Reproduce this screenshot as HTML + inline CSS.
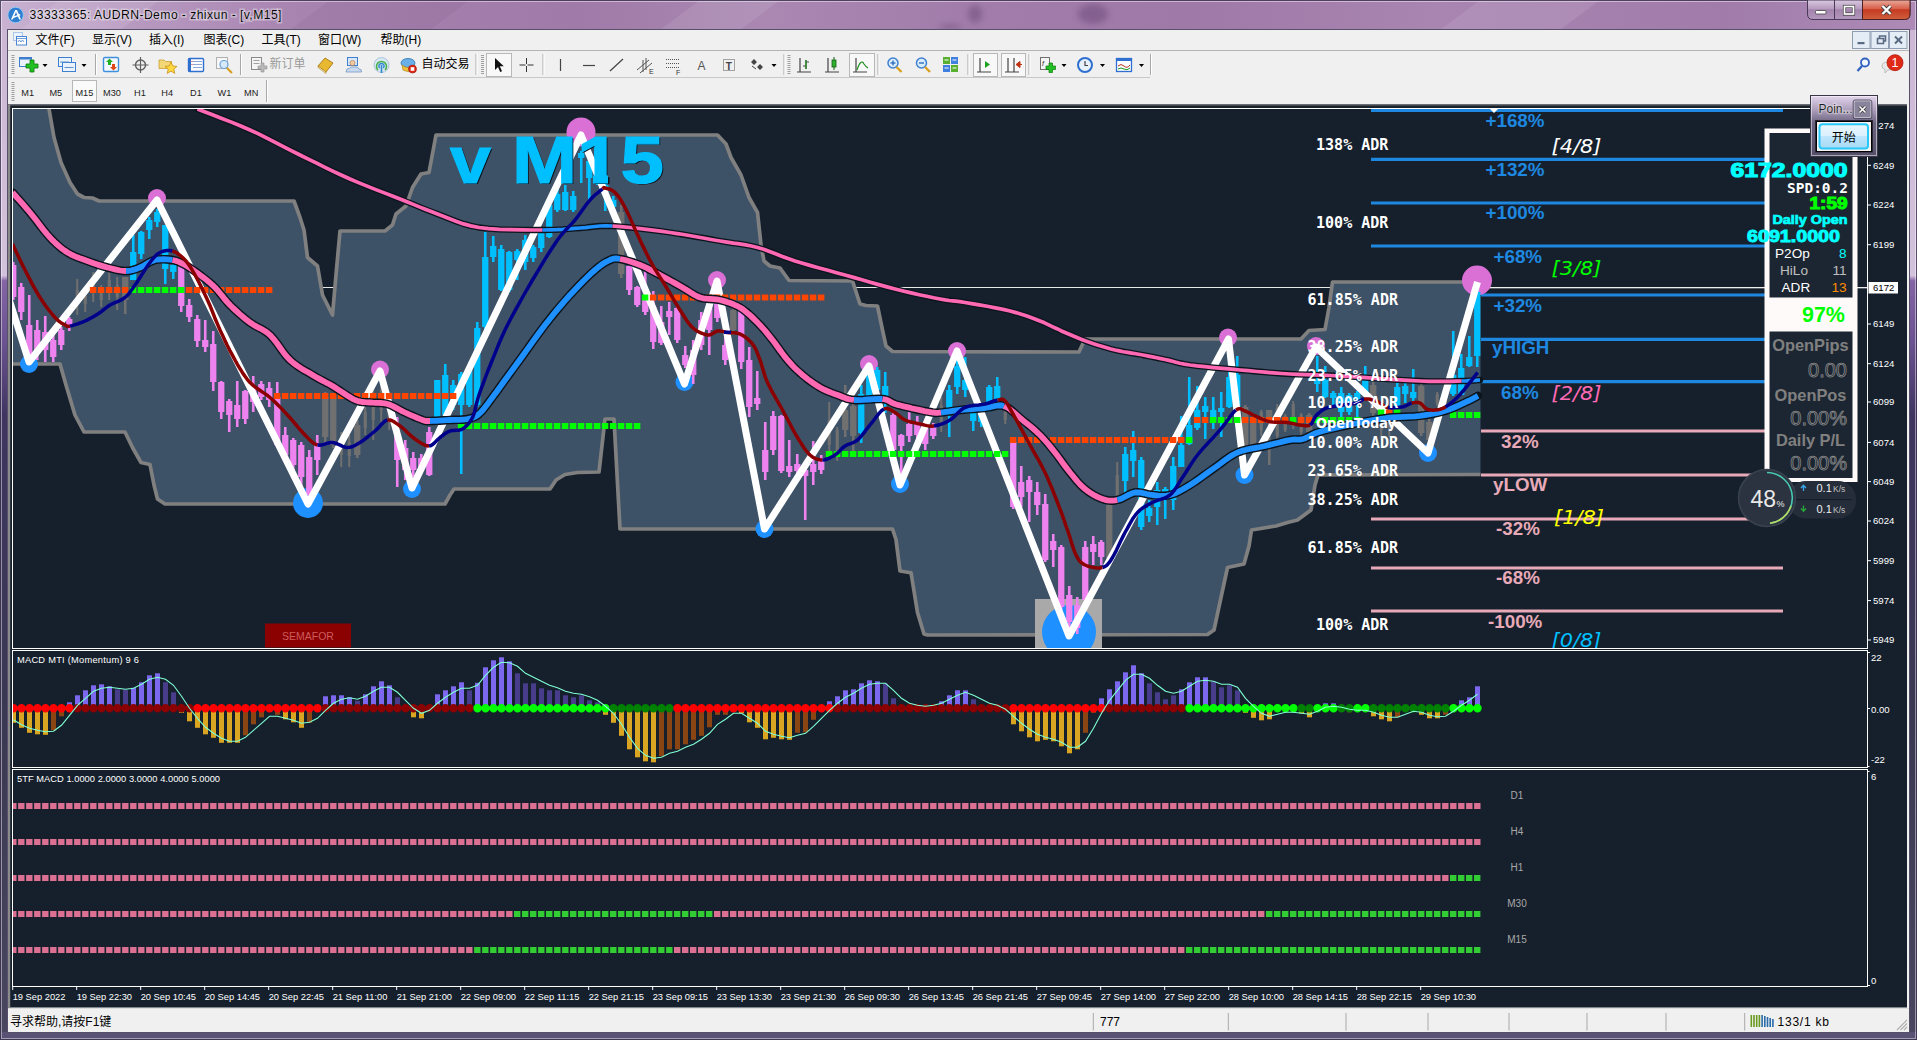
<!DOCTYPE html><html><head><meta charset="utf-8"><title>33333365: AUDRN-Demo - zhixun - [v,M15]</title>
<style>html,body{margin:0;padding:0;background:#8a6a9a;}body{width:1917px;height:1040px;overflow:hidden;position:relative;font-family:"Liberation Sans","Noto Sans CJK SC",sans-serif;}svg{position:absolute;left:0;top:0;display:block}text{white-space:pre}</style></head><body>
<svg width="1917" height="1040" viewBox="0 0 1917 1040">
<defs>
<linearGradient id="gTitle" x1="0" y1="0" x2="1" y2="0">
<stop offset="0" stop-color="#c9b2d2"/><stop offset="0.06" stop-color="#b99cc2"/><stop offset="0.16" stop-color="#a783b0"/><stop offset="0.3" stop-color="#a07aa8"/><stop offset="0.4" stop-color="#aa88b2"/><stop offset="0.5" stop-color="#a27dab"/><stop offset="0.62" stop-color="#9f79a8"/><stop offset="0.75" stop-color="#a985b1"/><stop offset="0.9" stop-color="#a17cab"/><stop offset="1" stop-color="#ad8bb6"/>
</linearGradient>
<linearGradient id="gSide" x1="0" y1="0" x2="0" y2="1">
<stop offset="0" stop-color="#cbb6d4"/><stop offset="0.265" stop-color="#d3c2dc"/><stop offset="0.27" stop-color="#8464a4"/><stop offset="0.33" stop-color="#6a5290"/><stop offset="0.4" stop-color="#3f3560"/><stop offset="0.7" stop-color="#3a3852"/><stop offset="1" stop-color="#4a4660"/>
</linearGradient>
<linearGradient id="gClose" x1="0" y1="0" x2="0" y2="1"><stop offset="0" stop-color="#e9a99a"/><stop offset="0.45" stop-color="#d8604a"/><stop offset="0.5" stop-color="#c53a22"/><stop offset="1" stop-color="#d0603c"/></linearGradient>
<linearGradient id="gBtn" x1="0" y1="0" x2="0" y2="1"><stop offset="0" stop-color="#d9c9e0"/><stop offset="0.45" stop-color="#b79cc0"/><stop offset="0.5" stop-color="#a283ad"/><stop offset="1" stop-color="#b498bd"/></linearGradient>
<linearGradient id="gStart" x1="0" y1="0" x2="0" y2="1"><stop offset="0" stop-color="#eaf6fd"/><stop offset="0.5" stop-color="#d9f0fc"/><stop offset="0.5" stop-color="#bee6fd"/><stop offset="1" stop-color="#a7d9f5"/></linearGradient>
<linearGradient id="gMini" x1="0" y1="0" x2="0" y2="1"><stop offset="0" stop-color="#e4d6ee"/><stop offset="0.25" stop-color="#a99bb8"/><stop offset="0.45" stop-color="#6b6480"/><stop offset="1" stop-color="#55506a"/></linearGradient>
<filter id="fBlur" x="-50%" y="-50%" width="200%" height="200%"><feGaussianBlur stdDeviation="3"/></filter><clipPath id="cMain"><rect x="13" y="109" width="1854" height="539"/></clipPath>
<clipPath id="cOne"><rect x="440" y="100" width="260" height="74.6"/><rect x="440" y="174.5" width="139.5" height="25"/><rect x="593" y="174.5" width="15" height="25"/><rect x="619.5" y="174.5" width="80" height="25"/></clipPath><clipPath id="cTF"><rect x="13" y="770" width="1854" height="216"/></clipPath><clipPath id="cMacd"><rect x="13" y="651" width="1854" height="116"/></clipPath>
</defs>
<rect x="0" y="0" width="1917" height="1040" fill="url(#gSide)"/>
<rect x="0" y="0" width="1917" height="30" fill="url(#gTitle)"/>
<g opacity="0.09" fill="#fff"><polygon points="60,0 160,0 120,30 20,30"/><polygon points="700,0 780,0 740,30 660,30"/><polygon points="1480,0 1600,0 1560,30 1440,30"/></g>
<g opacity="0.06" fill="#402050"><polygon points="330,0 470,0 430,30 290,30"/></g><g fill="#5a3868" opacity="0.4" filter="url(#fBlur)"><ellipse cx="975" cy="14" rx="7" ry="9"/><ellipse cx="1093" cy="14" rx="15" ry="10"/><ellipse cx="950" cy="27" rx="12" ry="2.5"/></g>
<rect x="0" y="1032" width="1917" height="8" fill="#5a5274"/>
<rect x="0.5" y="0.5" width="1916" height="1039" fill="none" stroke="#3c3050" stroke-opacity="0.8"/>
<rect x="1.5" y="1.5" width="1914" height="1037" fill="none" stroke="#fff" stroke-opacity="0.45"/>
<rect x="7" y="29" width="1903" height="1004" fill="#57506a"/>
<rect x="8" y="30" width="1901" height="1002" fill="#F0F0F0"/>
<circle cx="15.6" cy="15" r="7.8" fill="#2f7fd0"/><circle cx="15.6" cy="15" r="7.8" fill="none" stroke="#9cc8f0" stroke-width="1"/>
<path d="M11 19.5 L15.2 10 L17 10 L21 19.5 L19.2 19.5 L16 12 L12.8 19.5 Z M12.5 17 L20 14 L20.5 15.2 L13 18.2Z" fill="#fff"/>
<text x="29.5" y="18.8" font-size="12.2" fill="#fff" stroke="#fff" stroke-width="3" stroke-opacity="0.35" textLength="252" font-family='"Liberation Sans","Noto Sans CJK SC",sans-serif'>33333365: AUDRN-Demo - zhixun - [v,M15]</text>
<text x="29.5" y="18.8" font-size="12.2" fill="#000" textLength="252" font-family='"Liberation Sans","Noto Sans CJK SC",sans-serif'>33333365: AUDRN-Demo - zhixun - [v,M15]</text>
<path d="M1807.5 0 V14 Q1807.5 19.5 1813 19.5 H1904.5 Q1910 19.5 1910 14 V0 Z" fill="url(#gBtn)" stroke="#4a3a58" stroke-width="1"/>
<path d="M1862.5 0 V19.5 H1904.5 Q1910 19.5 1910 14 V0 Z" fill="url(#gClose)" stroke="#4a2020" stroke-width="1"/>
<line x1="1834.5" y1="0" x2="1834.5" y2="19" stroke="#4a3a58"/>
<rect x="1815.5" y="10.5" width="10.5" height="3.5" rx="1" fill="#fff" stroke="#444" stroke-width="0.8"/>
<rect x="1844.5" y="6.5" width="9" height="7.5" fill="none" stroke="#444" stroke-width="3.2"/><rect x="1844.5" y="6.5" width="9" height="7.5" fill="none" stroke="#fff" stroke-width="1.7"/>
<path d="M1882.5 6 L1890.5 14 M1890.5 6 L1882.5 14" stroke="#444" stroke-width="4"/><path d="M1882.5 6 L1890.5 14 M1890.5 6 L1882.5 14" stroke="#fff" stroke-width="2.3"/>
<rect x="8" y="30" width="1901" height="20.5" fill="#F0F0F0"/>
<line x1="8" y1="50.5" x2="1909" y2="50.5" stroke="#b4b4b4"/>
<rect x="13.5" y="32.5" width="9" height="8" fill="#eaf2fb" stroke="#6a9bd8" stroke-dasharray="1 1"/><rect x="16.5" y="36.5" width="10" height="8.5" fill="#fff" stroke="#4a86d0"/><path d="M18 42 l1.5 -2 l1.5 2 l1.5 -2 l1.5 2" stroke="#4a86d0" fill="none" stroke-width="0.8"/><line x1="17" y1="38.5" x2="26" y2="38.5" stroke="#4a86d0" stroke-width="0.8"/>
<text x="35.5" y="44.3" font-size="12" fill="#000" font-family='"Liberation Sans","Noto Sans CJK SC",sans-serif'>文件(F)</text>
<text x="92" y="44.3" font-size="12" fill="#000" font-family='"Liberation Sans","Noto Sans CJK SC",sans-serif'>显示(V)</text>
<text x="149" y="44.3" font-size="12" fill="#000" font-family='"Liberation Sans","Noto Sans CJK SC",sans-serif'>插入(I)</text>
<text x="203.5" y="44.3" font-size="12" fill="#000" font-family='"Liberation Sans","Noto Sans CJK SC",sans-serif'>图表(C)</text>
<text x="261.5" y="44.3" font-size="12" fill="#000" font-family='"Liberation Sans","Noto Sans CJK SC",sans-serif'>工具(T)</text>
<text x="318" y="44.3" font-size="12" fill="#000" font-family='"Liberation Sans","Noto Sans CJK SC",sans-serif'>窗口(W)</text>
<text x="380.5" y="44.3" font-size="12" fill="#000" font-family='"Liberation Sans","Noto Sans CJK SC",sans-serif'>帮助(H)</text>
<rect x="1852.5" y="31.5" width="17.5" height="17" fill="#e4ecf5" stroke="#8e9db3"/>
<rect x="1871" y="31.5" width="17.5" height="17" fill="#e4ecf5" stroke="#8e9db3"/>
<rect x="1889.5" y="31.5" width="17.5" height="17" fill="#e4ecf5" stroke="#8e9db3"/>
<rect x="1857.5" y="42" width="7" height="2.2" fill="#5a6a82"/>
<path d="M1877.5 38.5 h6 v5 h-6 z M1879.5 38.5 v-2.5 h6 v5 h-2" fill="none" stroke="#5a6a82" stroke-width="1.6"/>
<path d="M1895 36.5 l7 7 m0 -7 l-7 7" stroke="#5a6a82" stroke-width="2"/>
<rect x="8" y="51" width="1901" height="27" fill="#F0F0F0"/>
<line x1="8" y1="77.5" x2="1150" y2="77.5" stroke="#c8c8c8"/>
<rect x="11.5" y="55" width="3" height="1" fill="#a0a0a0"/><rect x="11.5" y="57" width="3" height="1" fill="#a0a0a0"/><rect x="11.5" y="59" width="3" height="1" fill="#a0a0a0"/><rect x="11.5" y="61" width="3" height="1" fill="#a0a0a0"/><rect x="11.5" y="63" width="3" height="1" fill="#a0a0a0"/><rect x="11.5" y="65" width="3" height="1" fill="#a0a0a0"/><rect x="11.5" y="67" width="3" height="1" fill="#a0a0a0"/><rect x="11.5" y="69" width="3" height="1" fill="#a0a0a0"/><rect x="11.5" y="71" width="3" height="1" fill="#a0a0a0"/><rect x="11.5" y="73" width="3" height="1" fill="#a0a0a0"/>
<rect x="481" y="55" width="3" height="1" fill="#a0a0a0"/><rect x="481" y="57" width="3" height="1" fill="#a0a0a0"/><rect x="481" y="59" width="3" height="1" fill="#a0a0a0"/><rect x="481" y="61" width="3" height="1" fill="#a0a0a0"/><rect x="481" y="63" width="3" height="1" fill="#a0a0a0"/><rect x="481" y="65" width="3" height="1" fill="#a0a0a0"/><rect x="481" y="67" width="3" height="1" fill="#a0a0a0"/><rect x="481" y="69" width="3" height="1" fill="#a0a0a0"/><rect x="481" y="71" width="3" height="1" fill="#a0a0a0"/><rect x="481" y="73" width="3" height="1" fill="#a0a0a0"/>
<rect x="787.5" y="55" width="3" height="1" fill="#a0a0a0"/><rect x="787.5" y="57" width="3" height="1" fill="#a0a0a0"/><rect x="787.5" y="59" width="3" height="1" fill="#a0a0a0"/><rect x="787.5" y="61" width="3" height="1" fill="#a0a0a0"/><rect x="787.5" y="63" width="3" height="1" fill="#a0a0a0"/><rect x="787.5" y="65" width="3" height="1" fill="#a0a0a0"/><rect x="787.5" y="67" width="3" height="1" fill="#a0a0a0"/><rect x="787.5" y="69" width="3" height="1" fill="#a0a0a0"/><rect x="787.5" y="71" width="3" height="1" fill="#a0a0a0"/><rect x="787.5" y="73" width="3" height="1" fill="#a0a0a0"/>
<line x1="95.5" y1="54" x2="95.5" y2="75" stroke="#a8a8a8"/><line x1="96.5" y1="54" x2="96.5" y2="75" stroke="#fff"/>
<line x1="240.5" y1="54" x2="240.5" y2="75" stroke="#a8a8a8"/><line x1="241.5" y1="54" x2="241.5" y2="75" stroke="#fff"/>
<line x1="476" y1="54" x2="476" y2="75" stroke="#a8a8a8"/><line x1="477" y1="54" x2="477" y2="75" stroke="#fff"/>
<line x1="543" y1="54" x2="543" y2="75" stroke="#a8a8a8"/><line x1="544" y1="54" x2="544" y2="75" stroke="#fff"/>
<line x1="784" y1="54" x2="784" y2="75" stroke="#a8a8a8"/><line x1="785" y1="54" x2="785" y2="75" stroke="#fff"/>
<line x1="878" y1="54" x2="878" y2="75" stroke="#a8a8a8"/><line x1="879" y1="54" x2="879" y2="75" stroke="#fff"/>
<line x1="968" y1="54" x2="968" y2="75" stroke="#a8a8a8"/><line x1="969" y1="54" x2="969" y2="75" stroke="#fff"/>
<line x1="1029" y1="54" x2="1029" y2="75" stroke="#a8a8a8"/><line x1="1030" y1="54" x2="1030" y2="75" stroke="#fff"/>
<line x1="1150.5" y1="54" x2="1150.5" y2="75" stroke="#a8a8a8"/><line x1="1151.5" y1="54" x2="1151.5" y2="75" stroke="#fff"/>
<path d="M42.5 64 h5 l-2.5 3 z" fill="#000"/>
<path d="M81.5 64 h5 l-2.5 3 z" fill="#000"/>
<path d="M771.5 64 h5 l-2.5 3 z" fill="#000"/>
<path d="M1061.5 64 h5 l-2.5 3 z" fill="#000"/>
<path d="M1100.0 64 h5 l-2.5 3 z" fill="#000"/>
<path d="M1139.0 64 h5 l-2.5 3 z" fill="#000"/>
<rect x="19.5" y="57.5" width="12" height="9" fill="#eaf3fc" stroke="#3f7fcf"/><rect x="19.5" y="57.5" width="12" height="2" fill="#3f7fcf"/><path d="M26 64 h4 v-4 h4 v4 h4 v4 h-4 v4 h-4 v-4 h-4 z" fill="#22c022" stroke="#0a7a0a" stroke-width="0.8"/>
<rect x="58.5" y="57.5" width="13" height="9" fill="#eaf3fc" stroke="#3f7fcf"/><rect x="62.5" y="62.5" width="13" height="9" fill="#eaf3fc" stroke="#3f7fcf"/><path d="M60 62 h9 M64.5 67.5 h9" stroke="#5f8fcf" stroke-width="1"/>
<rect x="103.5" y="57.5" width="15" height="14" rx="1.5" fill="#f4f9ff" stroke="#3f8fdf" stroke-width="1.4"/><path d="M108 65 v-3 h-2 l3.5 -3.5 l3.5 3.5 h-2 v3z" fill="#22b022"/><path d="M112 64 v3 h-2 l3.5 3.5 l3.5 -3.5 h-2 v-3z" fill="#e04818"/>
<circle cx="140.5" cy="65" r="5" fill="none" stroke="#606060" stroke-width="1.4"/><path d="M140.5 57 v16 M132.5 65 h16" stroke="#606060" stroke-width="1.2"/>
<path d="M159 60 h5 l1.5 1.5 h6 v7 h-12.5z" fill="#f4d878" stroke="#c8a030" stroke-width="0.8"/><path d="M171 62 l1.8 4 l4.2 .4 l-3.2 2.8 l1 4.2 l-3.8 -2.3 l-3.8 2.3 l1 -4.2 l-3.2 -2.8 l4.2 -.4z" fill="#ffd840" stroke="#c89018" stroke-width="0.8"/>
<rect x="188.5" y="58.5" width="15" height="13" rx="1" fill="#fdfdff" stroke="#2f6fcf" stroke-width="1.4"/><rect x="188.5" y="58.5" width="2.5" height="13" fill="#2f6fcf"/><path d="M193 61.5 h9 M193 64.5 h9 M193 67.5 h9" stroke="#8aa8d8" stroke-width="1"/><path d="M191.5 61.5 h1 M191.5 64.5 h1" stroke="#e02020" stroke-width="1"/>
<rect x="216.5" y="57.5" width="11" height="11" fill="#f6f6f6" stroke="#b0b0b0"/><circle cx="224" cy="64.5" r="4" fill="#cfe6fa" fill-opacity="0.8" stroke="#6aa0d8" stroke-width="1.2"/><path d="M227 68 l5 5" stroke="#d8a020" stroke-width="2.2"/>
<rect x="251.5" y="57.5" width="10" height="12" fill="#f4f4f4" stroke="#8a8a8a"/><path d="M253.5 60.5 h6 M253.5 63.5 h6" stroke="#a0a0a0"/><path d="M258 66 h3 v-3 h3 v3 h3 v3 h-3 v3 h-3 v-3 h-3z" fill="#b8b8b8" stroke="#909090" stroke-width="0.6"/>
<text x="269.5" y="68" font-size="12" fill="#9a9a9a" font-family='"Liberation Sans","Noto Sans CJK SC",sans-serif'>新订单</text>
<path d="M318 66 l7 -8 l8 5 l-7 9z" fill="#e8b830" stroke="#a87810" stroke-width="0.9"/><path d="M318 66 l8 6 l0 1.5 l-8 -6z" fill="#fff4d0" stroke="#a87810" stroke-width="0.6"/>
<rect x="347.5" y="57.5" width="10" height="8" fill="#d8e8f8" stroke="#3f7fcf"/><circle cx="352.5" cy="63" r="2.6" fill="#f0c8a0" stroke="#a87850" stroke-width="0.6"/><path d="M346 72 q0 -4 4 -4 q1 -2 4 -1 q4 -1 5 2 q3 0 2.5 3z" fill="#c8daf0" stroke="#7898c0" stroke-width="0.8"/>
<circle cx="381.5" cy="65" r="7.5" fill="#d8e8f4" stroke="#a0b8d0" stroke-width="0.8"/><path d="M378 70 a5 5 0 1 1 7 0" fill="none" stroke="#48b048" stroke-width="1.6"/><path d="M379.8 68 a2.6 2.6 0 1 1 3.4 0" fill="none" stroke="#3088d0" stroke-width="1.4"/><rect x="380.7" y="65" width="1.6" height="8" fill="#3088d0"/>
<ellipse cx="408" cy="63" rx="7" ry="4.5" fill="#6ab0e8" stroke="#3070b0" stroke-width="0.8"/><path d="M402 65 q6 5 12 0 l-1 5 q-5 3 -10 0z" fill="#f0c040" stroke="#b08818" stroke-width="0.7"/><circle cx="412.5" cy="69" r="4" fill="#e02818" stroke="#901008" stroke-width="0.6"/><rect x="410.7" y="67.2" width="3.6" height="3.6" fill="#fff"/>
<text x="421.5" y="68" font-size="12" fill="#000" font-family='"Liberation Sans","Noto Sans CJK SC",sans-serif'>自动交易</text>
<rect x="486.5" y="53.5" width="25" height="23" fill="#f8f8f8" stroke="#b8b8b8"/>
<path d="M495 58 v12 l3 -3 l2.2 5 l1.8 -.8 l-2.2 -5 h4z" fill="#111"/>
<path d="M526.5 58 v14 M519.5 65 h14" stroke="#333" stroke-width="1"/><rect x="525.5" y="64" width="2" height="2" fill="#F0F0F0"/>
<path d="M560.5 59 v12" stroke="#444" stroke-width="1.2"/><path d="M583 65.5 h12" stroke="#444" stroke-width="1.2"/><path d="M610 71 l13 -12" stroke="#444" stroke-width="1.2"/>
<path d="M637 70 l12 -10 M640 73 l12 -10 M643 60 v12 M646 58 v12" stroke="#555" stroke-width="1"/><text x="649" y="74" font-size="7" fill="#333" font-family='"Liberation Sans","Noto Sans CJK SC",sans-serif'>E</text>
<path d="M666 59.5 h14 M666 63.5 h14 M666 67.5 h14" stroke="#555" stroke-width="1" stroke-dasharray="1 1"/><text x="676" y="74.5" font-size="7" fill="#333" font-family='"Liberation Sans","Noto Sans CJK SC",sans-serif'>F</text>
<text x="697.5" y="70" font-size="12" fill="#555" font-family='"Liberation Sans","Noto Sans CJK SC",sans-serif'>A</text>
<rect x="723.5" y="59.5" width="11" height="11" fill="none" stroke="#555" stroke-dasharray="1 1"/><text x="725.8" y="69.5" font-size="10" font-weight="bold" fill="#444" font-family='"Liberation Sans","Noto Sans CJK SC",sans-serif'>T</text>
<path d="M751 62 l3 -3 l3 3 l-3 3z M757 67 l3 -3 l3 3 l-3 3z" fill="#444"/><path d="M752 66 l4 3" stroke="#444"/>
<path d="M800 58 v14 M797 72 h14 M806 60 v9 M803 66 h3 M806 62 h3" stroke="#444" stroke-width="1.2" fill="none"/><path d="M806 60 v9" stroke="#209020" stroke-width="1.2"/>
<path d="M828 58 v14 M825 72 h14" stroke="#444" stroke-width="1.2" fill="none"/><rect x="832" y="60" width="4" height="7" fill="#30b030" stroke="#106010" stroke-width="0.8"/><path d="M834 57 v3 M834 67 v3" stroke="#106010"/>
<rect x="849.5" y="53.5" width="25" height="23" fill="#f8f8f8" stroke="#b8b8b8"/>
<path d="M856 58 v14 M853 72 h14" stroke="#444" stroke-width="1.2" fill="none"/><path d="M857 70 q4 -12 7 -6 q2 3 4 4" stroke="#209020" stroke-width="1.2" fill="none"/>
<circle cx="893" cy="63" r="5" fill="#d8ecfb" stroke="#3f7fcf" stroke-width="1.5"/><path d="M896.5 67 l5 5" stroke="#d8a020" stroke-width="2.4"/><path d="M890.5 63 h5" stroke="#2f6fbf" stroke-width="1.4"/>
<path d="M893 60.5 v5" stroke="#2f6fbf" stroke-width="1.4"/>
<circle cx="921.5" cy="63" r="5" fill="#d8ecfb" stroke="#3f7fcf" stroke-width="1.5"/><path d="M925.0 67 l5 5" stroke="#d8a020" stroke-width="2.4"/><path d="M919.0 63 h5" stroke="#2f6fbf" stroke-width="1.4"/>
<rect x="943" y="57" width="7" height="7" fill="#58b030"/><rect x="951" y="57" width="7" height="7" fill="#3f7fdf"/><rect x="943" y="65" width="7" height="7" fill="#3f7fdf"/><rect x="951" y="65" width="7" height="7" fill="#58b030"/><path d="M944.5 60 h4 M952.5 60 h4 M944.5 68 h4 M952.5 68 h4" stroke="#fff" stroke-width="1.2"/>
<rect x="973.5" y="53.5" width="24" height="23" fill="#f8f8f8" stroke="#b8b8b8"/><rect x="1001.5" y="53.5" width="24" height="23" fill="#f8f8f8" stroke="#b8b8b8"/>
<path d="M980 58 v14 M977 72 h14" stroke="#444" stroke-width="1.2" fill="none"/><path d="M985 61 l5 3.5 l-5 3.5z" fill="#20a020"/>
<path d="M1008 58 v14 M1005 72 h14 M1014 58 v14" stroke="#444" stroke-width="1.2" fill="none"/><path d="M1020 61.5 l-4 3 l4 3z M1019 64.5 h3" fill="#c03010" stroke="#c03010"/>
<rect x="1040.5" y="57.5" width="9" height="12" fill="#f4f4f4" stroke="#707070"/><text x="1042" y="66" font-size="7" font-style="italic" fill="#333" font-family='"Liberation Sans","Noto Sans CJK SC",sans-serif'>f</text><path d="M1046 66 h3 v-3 h3.5 v3 h3 v3.5 h-3 v3 h-3.5 v-3 h-3z" fill="#22c022" stroke="#0a7a0a" stroke-width="0.7"/>
<circle cx="1085" cy="65" r="7" fill="#e8f2fc" stroke="#2f6fcf" stroke-width="2"/><path d="M1085 61 v4.5 h3" stroke="#444" stroke-width="1.2" fill="none"/>
<rect x="1116.5" y="58.5" width="15" height="13" fill="#fafcff" stroke="#2f6fcf" stroke-width="1.3"/><rect x="1116.5" y="58.5" width="15" height="2.5" fill="#2f6fcf"/><path d="M1118 66 q3 -3 6 0 t6 -1" stroke="#c03020" fill="none"/><path d="M1118 69 q3 -2 6 0 t6 -1" stroke="#20a020" fill="none"/>
<circle cx="1865" cy="62.5" r="4" fill="#f0f6ff" stroke="#2f5fbf" stroke-width="1.8"/><path d="M1862 66 l-4.5 5" stroke="#2f5fbf" stroke-width="2.2"/>
<path d="M1882 66 q0 -4 6 -4 q6 0 6 4 q0 4 -6 4 l-3 3 l0 -3.5 q-3 -1 -3 -3.5z" fill="#e8e8e8" stroke="#b0b0b0" stroke-width="0.8"/><circle cx="1895" cy="62.7" r="8" fill="#e02a18"/><circle cx="1895" cy="62.7" r="8" fill="none" stroke="#b01808" stroke-width="0.8"/><text x="1891.6" y="67.2" font-size="12.5" fill="#fff" font-family='"Liberation Sans","Noto Sans CJK SC",sans-serif'>1</text>
<rect x="8" y="78" width="1901" height="26.5" fill="#F0F0F0"/>
<rect x="11.5" y="82" width="3" height="1" fill="#a0a0a0"/><rect x="11.5" y="84" width="3" height="1" fill="#a0a0a0"/><rect x="11.5" y="86" width="3" height="1" fill="#a0a0a0"/><rect x="11.5" y="88" width="3" height="1" fill="#a0a0a0"/><rect x="11.5" y="90" width="3" height="1" fill="#a0a0a0"/><rect x="11.5" y="92" width="3" height="1" fill="#a0a0a0"/><rect x="11.5" y="94" width="3" height="1" fill="#a0a0a0"/><rect x="11.5" y="96" width="3" height="1" fill="#a0a0a0"/><rect x="11.5" y="98" width="3" height="1" fill="#a0a0a0"/><rect x="11.5" y="100" width="3" height="1" fill="#a0a0a0"/>
<rect x="72.5" y="80.5" width="24" height="21" fill="#fafafa" stroke="#b8b8b8"/>
<text x="21.3" y="95.5" font-size="9.2" fill="#222" font-family='"Liberation Sans","Noto Sans CJK SC",sans-serif'>M1</text>
<text x="49.4" y="95.5" font-size="9.2" fill="#222" font-family='"Liberation Sans","Noto Sans CJK SC",sans-serif'>M5</text>
<text x="75.4" y="95.5" font-size="9.2" fill="#222" font-family='"Liberation Sans","Noto Sans CJK SC",sans-serif'>M15</text>
<text x="103" y="95.5" font-size="9.2" fill="#222" font-family='"Liberation Sans","Noto Sans CJK SC",sans-serif'>M30</text>
<text x="134" y="95.5" font-size="9.2" fill="#222" font-family='"Liberation Sans","Noto Sans CJK SC",sans-serif'>H1</text>
<text x="161.3" y="95.5" font-size="9.2" fill="#222" font-family='"Liberation Sans","Noto Sans CJK SC",sans-serif'>H4</text>
<text x="190" y="95.5" font-size="9.2" fill="#222" font-family='"Liberation Sans","Noto Sans CJK SC",sans-serif'>D1</text>
<text x="217.5" y="95.5" font-size="9.2" fill="#222" font-family='"Liberation Sans","Noto Sans CJK SC",sans-serif'>W1</text>
<text x="244" y="95.5" font-size="9.2" fill="#222" font-family='"Liberation Sans","Noto Sans CJK SC",sans-serif'>MN</text>
<line x1="266.5" y1="80" x2="266.5" y2="102" stroke="#a8a8a8"/><line x1="267.5" y1="80" x2="267.5" y2="102" stroke="#fff"/>
<rect x="8" y="104.5" width="1899" height="903" fill="#16202C"/>
<rect x="8" y="104" width="1899" height="2" fill="#6a6e74"/><rect x="8" y="105.5" width="1899" height="2.5" fill="#1a222c"/>
<rect x="8" y="104.5" width="2.2" height="903" fill="#8a8a8a"/>
<rect x="1907" y="104.5" width="2" height="903" fill="#F0F0F0"/>
<g clip-path="url(#cMain)">
<line x1="13" y1="287.5" x2="1867" y2="287.5" stroke="#e8e8e8" stroke-width="1"/>
<polygon points="13.0,96.0 47.0,96.0 49.0,109.0 54.0,137.5 61.0,162.5 70.0,182.5 77.5,194.0 84.0,197.5 92.5,198.0 99.0,201.0 294.0,201.0 300.0,217.5 304.0,230.0 307.5,257.5 317.5,266.0 322.5,295.0 332.5,315.0 336.0,275.0 340.0,231.0 385.0,231.0 392.5,225.0 396.0,214.0 406.0,206.0 412.5,187.5 421.0,174.0 429.0,172.5 436.0,135.0 717.5,135.0 726.0,144.0 731.0,157.5 741.0,175.0 749.0,197.5 757.5,212.5 761.0,245.0 764.0,261.0 770.0,266.0 780.0,268.0 789.0,280.5 852.5,281.0 860.0,304.0 866.0,305.5 877.5,306.0 882.5,330.0 886.0,346.0 892.5,351.5 1079.0,352.0 1085.0,339.0 1301.0,339.0 1309.0,330.5 1325.0,329.5 1329.0,307.5 1332.5,282.0 1480.5,282.0 1480.5,474.5 1318.0,475.0 1315.0,485.0 1311.0,510.0 1297.5,520.0 1287.5,522.5 1276.0,526.0 1251.5,530.0 1249.0,546.0 1244.0,564.0 1227.5,567.5 1221.0,597.5 1214.0,630.0 1207.5,634.5 927.5,635.0 924.0,634.0 917.5,612.5 911.0,572.5 909.0,572.5 900.0,571.0 896.0,539.5 892.5,529.0 620.0,529.0 614.0,419.0 605.0,419.0 599.0,472.0 577.5,472.5 565.0,474.5 556.0,480.0 550.0,489.0 454.0,489.0 450.0,495.0 445.0,504.0 165.0,504.0 157.5,499.0 154.0,485.0 150.0,464.5 141.0,462.5 132.5,447.5 125.0,432.0 84.0,432.0 75.0,415.0 66.0,385.0 60.0,364.0 13.0,364.0" fill="#3D5167"/>
<polyline points="13.0,96.0 47.0,96.0 49.0,109.0 54.0,137.5 61.0,162.5 70.0,182.5 77.5,194.0 84.0,197.5 92.5,198.0 99.0,201.0 294.0,201.0 300.0,217.5 304.0,230.0 307.5,257.5 317.5,266.0 322.5,295.0 332.5,315.0 336.0,275.0 340.0,231.0 385.0,231.0 392.5,225.0 396.0,214.0 406.0,206.0 412.5,187.5 421.0,174.0 429.0,172.5 436.0,135.0 717.5,135.0 726.0,144.0 731.0,157.5 741.0,175.0 749.0,197.5 757.5,212.5 761.0,245.0 764.0,261.0 770.0,266.0 780.0,268.0 789.0,280.5 852.5,281.0 860.0,304.0 866.0,305.5 877.5,306.0 882.5,330.0 886.0,346.0 892.5,351.5 1079.0,352.0 1085.0,339.0 1301.0,339.0 1309.0,330.5 1325.0,329.5 1329.0,307.5 1332.5,282.0 1480.5,282.0" fill="none" stroke="#808080" stroke-width="3.7" stroke-linejoin="round"/>
<polyline points="13.0,364.0 60.0,364.0 66.0,385.0 75.0,415.0 84.0,432.0 125.0,432.0 132.5,447.5 141.0,462.5 150.0,464.5 154.0,485.0 157.5,499.0 165.0,504.0 445.0,504.0 450.0,495.0 454.0,489.0 550.0,489.0 556.0,480.0 565.0,474.5 577.5,472.5 599.0,472.0 605.0,419.0 614.0,419.0 620.0,529.0 892.5,529.0 896.0,539.5 900.0,571.0 909.0,572.5 911.0,572.5 917.5,612.5 924.0,634.0 927.5,635.0 1207.5,634.5 1214.0,630.0 1221.0,597.5 1227.5,567.5 1244.0,564.0 1249.0,546.0 1251.5,530.0 1276.0,526.0 1287.5,522.5 1297.5,520.0 1311.0,510.0 1315.0,485.0 1318.0,475.0 1480.5,474.5" fill="none" stroke="#808080" stroke-width="3.7" stroke-linejoin="round"/>
<rect x="1035" y="599" width="67" height="50" fill="#A9A9A9"/>
<line x1="1371" y1="110.5" x2="1783" y2="110.5" stroke="#1E88E0" stroke-width="3.2"/>
<line x1="1371" y1="159.3" x2="1765" y2="159.3" stroke="#1E88E0" stroke-width="3.2"/>
<line x1="1371" y1="203" x2="1765" y2="203" stroke="#1E88E0" stroke-width="3.2"/>
<line x1="1371" y1="246" x2="1765" y2="246" stroke="#1E88E0" stroke-width="3.2"/>
<line x1="1481" y1="295" x2="1765" y2="295" stroke="#1E88E0" stroke-width="3.2"/>
<line x1="1481" y1="339.4" x2="1765" y2="339.4" stroke="#1E88E0" stroke-width="3.2"/>
<line x1="1481" y1="381.6" x2="1765" y2="381.6" stroke="#1E88E0" stroke-width="3.2"/>
<line x1="1481" y1="431" x2="1765" y2="431" stroke="#E8AAB8" stroke-width="3.2"/>
<line x1="1481" y1="475" x2="1765" y2="475" stroke="#E8AAB8" stroke-width="3.2"/>
<line x1="1371" y1="519" x2="1765" y2="519" stroke="#E8AAB8" stroke-width="3.2"/>
<line x1="1371" y1="568" x2="1783" y2="568" stroke="#E8AAB8" stroke-width="3.2"/>
<line x1="1371" y1="611" x2="1783" y2="611" stroke="#E8AAB8" stroke-width="3.2"/>
<line x1="1481" y1="287.8" x2="1867" y2="287.8" stroke="#f0f0f0" stroke-width="1"/>
<circle cx="157" cy="198" r="9" fill="#DA70D6"/>
<circle cx="380" cy="369.5" r="9" fill="#DA70D6"/>
<circle cx="581" cy="132" r="14.5" fill="#DA70D6"/>
<circle cx="717" cy="280" r="9" fill="#DA70D6"/>
<circle cx="869" cy="364" r="9" fill="#DA70D6"/>
<circle cx="957" cy="351" r="9" fill="#DA70D6"/>
<circle cx="1228" cy="337.5" r="9" fill="#DA70D6"/>
<circle cx="1316" cy="346" r="9" fill="#DA70D6"/>
<circle cx="1477" cy="280.5" r="15" fill="#DA70D6"/>
<circle cx="29" cy="364" r="9" fill="#1E90FF"/>
<circle cx="308" cy="503" r="15" fill="#1E90FF"/>
<circle cx="412" cy="489" r="9" fill="#1E90FF"/>
<circle cx="684.5" cy="382" r="9" fill="#1E90FF"/>
<circle cx="764.5" cy="529" r="9" fill="#1E90FF"/>
<circle cx="900" cy="484" r="9" fill="#1E90FF"/>
<circle cx="1069" cy="632" r="27" fill="#1E90FF"/>
<circle cx="1244.5" cy="475" r="9" fill="#1E90FF"/>
<circle cx="1428" cy="453" r="9" fill="#1E90FF"/>
<rect x="11.95" y="262" width="2.6" height="38" fill="#EE82EE"/><rect x="10.10" y="265" width="6.3" height="32" fill="#EE82EE"/><rect x="19.95" y="283" width="2.6" height="37" fill="#EE82EE"/><rect x="18.10" y="287" width="6.3" height="25" fill="#EE82EE"/><rect x="27.95" y="295" width="2.6" height="70" fill="#EE82EE"/><rect x="26.10" y="325" width="6.3" height="30" fill="#EE82EE"/><rect x="35.95" y="320" width="2.6" height="40" fill="#EE82EE"/><rect x="34.10" y="330" width="6.3" height="22" fill="#EE82EE"/><rect x="43.95" y="316" width="2.6" height="46" fill="#EE82EE"/><rect x="42.10" y="332" width="6.3" height="18" fill="#EE82EE"/><rect x="51.95" y="330" width="2.6" height="32" fill="#EE82EE"/><rect x="50.10" y="340" width="6.3" height="17" fill="#EE82EE"/><rect x="59.95" y="327" width="2.6" height="23" fill="#EE82EE"/><rect x="58.10" y="330" width="6.3" height="15" fill="#EE82EE"/><rect x="67.95" y="317" width="2.6" height="14" fill="#EE82EE"/><rect x="66.10" y="319" width="6.3" height="8" fill="#EE82EE"/><rect x="76.25" y="279" width="2.0" height="36" fill="#707070"/><rect x="75.65" y="290" width="3.2" height="10" fill="#707070"/><rect x="84.25" y="290" width="2.0" height="22" fill="#707070"/><rect x="83.65" y="296" width="3.2" height="8" fill="#707070"/><rect x="92.25" y="272" width="2.0" height="30" fill="#707070"/><rect x="91.65" y="280" width="3.2" height="12" fill="#707070"/><rect x="100.25" y="285" width="2.0" height="22" fill="#707070"/><rect x="99.65" y="290" width="3.2" height="10" fill="#707070"/><rect x="108.25" y="272" width="2.0" height="28" fill="#707070"/><rect x="107.65" y="280" width="3.2" height="10" fill="#707070"/><rect x="116.25" y="277" width="2.0" height="33" fill="#707070"/><rect x="115.65" y="285" width="3.2" height="12" fill="#707070"/><rect x="123.95" y="277" width="2.6" height="37" fill="#707070"/><rect x="122.10" y="277" width="6.3" height="23" fill="#707070"/><rect x="131.95" y="235" width="2.6" height="45" fill="#00BFFF"/><rect x="130.10" y="252" width="6.3" height="28" fill="#00BFFF"/><rect x="139.95" y="231" width="2.6" height="28" fill="#00BFFF"/><rect x="138.10" y="232" width="6.3" height="22" fill="#00BFFF"/><rect x="147.95" y="217" width="2.6" height="22" fill="#00BFFF"/><rect x="146.10" y="220" width="6.3" height="10" fill="#00BFFF"/><rect x="155.95" y="209" width="2.6" height="18" fill="#00BFFF"/><rect x="154.10" y="212" width="6.3" height="10" fill="#00BFFF"/><rect x="163.95" y="225" width="2.6" height="59" fill="#00BFFF"/><rect x="162.10" y="225" width="6.3" height="44" fill="#00BFFF"/><rect x="171.95" y="260" width="2.6" height="19" fill="#00BFFF"/><rect x="170.10" y="265" width="6.3" height="7" fill="#00BFFF"/><rect x="179.95" y="264" width="2.6" height="48" fill="#EE82EE"/><rect x="178.10" y="265" width="6.3" height="41" fill="#EE82EE"/><rect x="187.95" y="299" width="2.6" height="23" fill="#EE82EE"/><rect x="186.10" y="305" width="6.3" height="12" fill="#EE82EE"/><rect x="195.95" y="315" width="2.6" height="32" fill="#EE82EE"/><rect x="194.10" y="319" width="6.3" height="22" fill="#EE82EE"/><rect x="203.95" y="320" width="2.6" height="32" fill="#EE82EE"/><rect x="202.10" y="340" width="6.3" height="7" fill="#EE82EE"/><rect x="211.95" y="331" width="2.6" height="60" fill="#EE82EE"/><rect x="210.10" y="344" width="6.3" height="38" fill="#EE82EE"/><rect x="219.95" y="381" width="2.6" height="38" fill="#EE82EE"/><rect x="218.10" y="382" width="6.3" height="30" fill="#EE82EE"/><rect x="227.95" y="399" width="2.6" height="33" fill="#EE82EE"/><rect x="226.10" y="401" width="6.3" height="14" fill="#EE82EE"/><rect x="235.95" y="381" width="2.6" height="46" fill="#EE82EE"/><rect x="234.10" y="405" width="6.3" height="14" fill="#EE82EE"/><rect x="243.95" y="390" width="2.6" height="34" fill="#EE82EE"/><rect x="242.10" y="391" width="6.3" height="28" fill="#EE82EE"/><rect x="251.95" y="376" width="2.6" height="36" fill="#EE82EE"/><rect x="250.10" y="387" width="6.3" height="15" fill="#EE82EE"/><rect x="259.95" y="381" width="2.6" height="19" fill="#EE82EE"/><rect x="258.10" y="384" width="6.3" height="13" fill="#EE82EE"/><rect x="267.95" y="382" width="2.6" height="25" fill="#EE82EE"/><rect x="266.10" y="388" width="6.3" height="12" fill="#EE82EE"/><rect x="275.95" y="382" width="2.6" height="65" fill="#EE82EE"/><rect x="274.10" y="397" width="6.3" height="48" fill="#EE82EE"/><rect x="283.95" y="427" width="2.6" height="33" fill="#EE82EE"/><rect x="282.10" y="435" width="6.3" height="20" fill="#EE82EE"/><rect x="291.95" y="438" width="2.6" height="32" fill="#EE82EE"/><rect x="290.10" y="440" width="6.3" height="25" fill="#EE82EE"/><rect x="299.95" y="442" width="2.6" height="45" fill="#EE82EE"/><rect x="298.10" y="445" width="6.3" height="32" fill="#EE82EE"/><rect x="307.95" y="450" width="2.6" height="53" fill="#EE82EE"/><rect x="306.10" y="457" width="6.3" height="38" fill="#EE82EE"/><rect x="315.95" y="435" width="2.6" height="40" fill="#EE82EE"/><rect x="314.10" y="445" width="6.3" height="15" fill="#EE82EE"/><rect x="323.95" y="392" width="2.6" height="53" fill="#707070"/><rect x="322.10" y="397" width="6.3" height="40" fill="#707070"/><rect x="331.95" y="395" width="2.6" height="53" fill="#707070"/><rect x="330.10" y="397" width="6.3" height="48" fill="#707070"/><rect x="340.25" y="432" width="2.0" height="35" fill="#707070"/><rect x="339.65" y="440" width="3.2" height="15" fill="#707070"/><rect x="348.25" y="435" width="2.0" height="32" fill="#707070"/><rect x="347.65" y="442" width="3.2" height="14" fill="#707070"/><rect x="355.95" y="420" width="2.6" height="38" fill="#707070"/><rect x="354.10" y="425" width="6.3" height="30" fill="#707070"/><rect x="364.25" y="407" width="2.0" height="28" fill="#707070"/><rect x="363.65" y="412" width="3.2" height="16" fill="#707070"/><rect x="372.25" y="385" width="2.0" height="55" fill="#707070"/><rect x="371.65" y="395" width="3.2" height="25" fill="#707070"/><rect x="380.25" y="382" width="2.0" height="40" fill="#707070"/><rect x="379.65" y="390" width="3.2" height="20" fill="#707070"/><rect x="388.25" y="395" width="2.0" height="35" fill="#707070"/><rect x="387.65" y="405" width="3.2" height="17" fill="#707070"/><rect x="395.95" y="417" width="2.6" height="70" fill="#EE82EE"/><rect x="394.10" y="435" width="6.3" height="25" fill="#EE82EE"/><rect x="403.95" y="440" width="2.6" height="40" fill="#EE82EE"/><rect x="402.10" y="448" width="6.3" height="22" fill="#EE82EE"/><rect x="411.95" y="452" width="2.6" height="25" fill="#EE82EE"/><rect x="410.10" y="458" width="6.3" height="12" fill="#EE82EE"/><rect x="419.95" y="454" width="2.6" height="18" fill="#EE82EE"/><rect x="418.10" y="458" width="6.3" height="10" fill="#EE82EE"/><rect x="427.95" y="427" width="2.6" height="49" fill="#EE82EE"/><rect x="426.10" y="432" width="6.3" height="43" fill="#EE82EE"/><rect x="435.95" y="380" width="2.6" height="42" fill="#00BFFF"/><rect x="434.10" y="380" width="6.3" height="37" fill="#00BFFF"/><rect x="443.95" y="364" width="2.6" height="51" fill="#00BFFF"/><rect x="442.10" y="375" width="6.3" height="40" fill="#00BFFF"/><rect x="451.95" y="380" width="2.6" height="30" fill="#00BFFF"/><rect x="450.10" y="385" width="6.3" height="20" fill="#00BFFF"/><rect x="459.95" y="372" width="2.6" height="102" fill="#00BFFF"/><rect x="458.10" y="374" width="6.3" height="31" fill="#00BFFF"/><rect x="467.95" y="362" width="2.6" height="45" fill="#00BFFF"/><rect x="466.10" y="370" width="6.3" height="35" fill="#00BFFF"/><rect x="475.95" y="322" width="2.6" height="85" fill="#00BFFF"/><rect x="474.10" y="328" width="6.3" height="77" fill="#00BFFF"/><rect x="483.95" y="232" width="2.6" height="98" fill="#00BFFF"/><rect x="482.10" y="257" width="6.3" height="70" fill="#00BFFF"/><rect x="491.95" y="236" width="2.6" height="26" fill="#00BFFF"/><rect x="490.10" y="246" width="6.3" height="11" fill="#00BFFF"/><rect x="499.95" y="245" width="2.6" height="46" fill="#00BFFF"/><rect x="498.10" y="249" width="6.3" height="41" fill="#00BFFF"/><rect x="507.95" y="251" width="2.6" height="41" fill="#00BFFF"/><rect x="506.10" y="252" width="6.3" height="38" fill="#00BFFF"/><rect x="515.95" y="249" width="2.6" height="31" fill="#00BFFF"/><rect x="514.10" y="251" width="6.3" height="9" fill="#00BFFF"/><rect x="523.95" y="235" width="2.6" height="35" fill="#00BFFF"/><rect x="522.10" y="240" width="6.3" height="22" fill="#00BFFF"/><rect x="531.95" y="245" width="2.6" height="17" fill="#00BFFF"/><rect x="530.10" y="247" width="6.3" height="11" fill="#00BFFF"/><rect x="539.95" y="230" width="2.6" height="22" fill="#00BFFF"/><rect x="538.10" y="233" width="6.3" height="15" fill="#00BFFF"/><rect x="547.95" y="204" width="2.6" height="34" fill="#00BFFF"/><rect x="546.10" y="205" width="6.3" height="32" fill="#00BFFF"/><rect x="555.95" y="185" width="2.6" height="27" fill="#00BFFF"/><rect x="554.10" y="194" width="6.3" height="16" fill="#00BFFF"/><rect x="563.95" y="185" width="2.6" height="26" fill="#00BFFF"/><rect x="562.10" y="192" width="6.3" height="18" fill="#00BFFF"/><rect x="571.95" y="191" width="2.6" height="21" fill="#00BFFF"/><rect x="570.10" y="196" width="6.3" height="14" fill="#00BFFF"/><rect x="579.95" y="151" width="2.6" height="32" fill="#00BFFF"/><rect x="578.10" y="153" width="6.3" height="5" fill="#00BFFF"/><rect x="587.95" y="150" width="2.6" height="50" fill="#00BFFF"/><rect x="586.10" y="161" width="6.3" height="17" fill="#00BFFF"/><rect x="595.95" y="140" width="2.6" height="45" fill="#00BFFF"/><rect x="594.10" y="145" width="6.3" height="33" fill="#00BFFF"/><rect x="603.95" y="183" width="2.6" height="28" fill="#00BFFF"/><rect x="602.10" y="185" width="6.3" height="7" fill="#00BFFF"/><rect x="611.95" y="196" width="2.6" height="16" fill="#00BFFF"/><rect x="610.10" y="200" width="6.3" height="7" fill="#00BFFF"/><rect x="619.95" y="205" width="2.6" height="73" fill="#707070"/><rect x="618.10" y="212" width="6.3" height="62" fill="#707070"/><rect x="627.95" y="265" width="2.6" height="30" fill="#EE82EE"/><rect x="626.10" y="266" width="6.3" height="24" fill="#EE82EE"/><rect x="635.95" y="286" width="2.6" height="21" fill="#EE82EE"/><rect x="634.10" y="287" width="6.3" height="18" fill="#EE82EE"/><rect x="643.95" y="270" width="2.6" height="45" fill="#EE82EE"/><rect x="642.10" y="295" width="6.3" height="17" fill="#EE82EE"/><rect x="651.95" y="291" width="2.6" height="58" fill="#EE82EE"/><rect x="650.10" y="307" width="6.3" height="35" fill="#EE82EE"/><rect x="659.95" y="306" width="2.6" height="39" fill="#EE82EE"/><rect x="658.10" y="322" width="6.3" height="21" fill="#EE82EE"/><rect x="667.95" y="302" width="2.6" height="33" fill="#EE82EE"/><rect x="666.10" y="311" width="6.3" height="6" fill="#EE82EE"/><rect x="675.95" y="305" width="2.6" height="38" fill="#EE82EE"/><rect x="674.10" y="308" width="6.3" height="32" fill="#EE82EE"/><rect x="683.95" y="346" width="2.6" height="22" fill="#EE82EE"/><rect x="682.10" y="355" width="6.3" height="10" fill="#EE82EE"/><rect x="691.95" y="340" width="2.6" height="44" fill="#EE82EE"/><rect x="690.10" y="350" width="6.3" height="25" fill="#EE82EE"/><rect x="699.95" y="312" width="2.6" height="38" fill="#EE82EE"/><rect x="698.10" y="320" width="6.3" height="25" fill="#EE82EE"/><rect x="707.95" y="300" width="2.6" height="55" fill="#EE82EE"/><rect x="706.10" y="305" width="6.3" height="25" fill="#EE82EE"/><rect x="715.95" y="282" width="2.6" height="40" fill="#EE82EE"/><rect x="714.10" y="288" width="6.3" height="30" fill="#EE82EE"/><rect x="723.95" y="330" width="2.6" height="35" fill="#EE82EE"/><rect x="722.10" y="345" width="6.3" height="15" fill="#EE82EE"/><rect x="731.95" y="305" width="2.6" height="30" fill="#707070"/><rect x="730.10" y="310" width="6.3" height="20" fill="#707070"/><rect x="739.95" y="311" width="2.6" height="58" fill="#EE82EE"/><rect x="738.10" y="311" width="6.3" height="51" fill="#EE82EE"/><rect x="747.95" y="347" width="2.6" height="70" fill="#EE82EE"/><rect x="746.10" y="360" width="6.3" height="47" fill="#EE82EE"/><rect x="755.95" y="371" width="2.6" height="39" fill="#EE82EE"/><rect x="754.10" y="398" width="6.3" height="6" fill="#EE82EE"/><rect x="763.95" y="422" width="2.6" height="58" fill="#EE82EE"/><rect x="762.10" y="450" width="6.3" height="22" fill="#EE82EE"/><rect x="771.95" y="411" width="2.6" height="44" fill="#EE82EE"/><rect x="770.10" y="416" width="6.3" height="34" fill="#EE82EE"/><rect x="779.95" y="415" width="2.6" height="58" fill="#EE82EE"/><rect x="778.10" y="416" width="6.3" height="55" fill="#EE82EE"/><rect x="787.95" y="440" width="2.6" height="37" fill="#EE82EE"/><rect x="786.10" y="466" width="6.3" height="6" fill="#EE82EE"/><rect x="795.95" y="454" width="2.6" height="23" fill="#EE82EE"/><rect x="794.10" y="464" width="6.3" height="7" fill="#EE82EE"/><rect x="803.95" y="468" width="2.6" height="52" fill="#EE82EE"/><rect x="802.10" y="470" width="6.3" height="6" fill="#EE82EE"/><rect x="811.95" y="441" width="2.6" height="44" fill="#EE82EE"/><rect x="810.10" y="464" width="6.3" height="8" fill="#EE82EE"/><rect x="819.95" y="455" width="2.6" height="19" fill="#EE82EE"/><rect x="818.10" y="458" width="6.3" height="12" fill="#EE82EE"/><rect x="828.25" y="402" width="2.0" height="53" fill="#707070"/><rect x="827.65" y="420" width="3.2" height="25" fill="#707070"/><rect x="836.25" y="427" width="2.0" height="34" fill="#707070"/><rect x="835.65" y="430" width="3.2" height="26" fill="#707070"/><rect x="843.95" y="385" width="2.6" height="52" fill="#707070"/><rect x="842.10" y="410" width="6.3" height="20" fill="#707070"/><rect x="851.95" y="403" width="2.6" height="48" fill="#707070"/><rect x="850.10" y="406" width="6.3" height="30" fill="#707070"/><rect x="859.95" y="385" width="2.6" height="58" fill="#00BFFF"/><rect x="858.10" y="394" width="6.3" height="39" fill="#00BFFF"/><rect x="867.95" y="366" width="2.6" height="34" fill="#00BFFF"/><rect x="866.10" y="367" width="6.3" height="30" fill="#00BFFF"/><rect x="875.95" y="367" width="2.6" height="25" fill="#00BFFF"/><rect x="874.10" y="370" width="6.3" height="20" fill="#00BFFF"/><rect x="883.95" y="372" width="2.6" height="41" fill="#00BFFF"/><rect x="882.10" y="386" width="6.3" height="10" fill="#00BFFF"/><rect x="891.95" y="413" width="2.6" height="39" fill="#EE82EE"/><rect x="890.10" y="415" width="6.3" height="35" fill="#EE82EE"/><rect x="899.95" y="434" width="2.6" height="50" fill="#EE82EE"/><rect x="898.10" y="435" width="6.3" height="11" fill="#EE82EE"/><rect x="907.95" y="412" width="2.6" height="30" fill="#EE82EE"/><rect x="906.10" y="424" width="6.3" height="12" fill="#EE82EE"/><rect x="915.95" y="416" width="2.6" height="26" fill="#EE82EE"/><rect x="914.10" y="422" width="6.3" height="13" fill="#EE82EE"/><rect x="923.95" y="425" width="2.6" height="25" fill="#EE82EE"/><rect x="922.10" y="428" width="6.3" height="16" fill="#EE82EE"/><rect x="931.95" y="423" width="2.6" height="16" fill="#EE82EE"/><rect x="930.10" y="426" width="6.3" height="10" fill="#EE82EE"/><rect x="940.25" y="397" width="2.0" height="35" fill="#707070"/><rect x="939.65" y="405" width="3.2" height="20" fill="#707070"/><rect x="947.95" y="385" width="2.6" height="52" fill="#00BFFF"/><rect x="946.10" y="390" width="6.3" height="22" fill="#00BFFF"/><rect x="955.95" y="352" width="2.6" height="42" fill="#00BFFF"/><rect x="954.10" y="366" width="6.3" height="21" fill="#00BFFF"/><rect x="963.95" y="357" width="2.6" height="40" fill="#00BFFF"/><rect x="962.10" y="380" width="6.3" height="10" fill="#00BFFF"/><rect x="971.95" y="410" width="2.6" height="21" fill="#00BFFF"/><rect x="970.10" y="411" width="6.3" height="10" fill="#00BFFF"/><rect x="979.95" y="408" width="2.6" height="19" fill="#00BFFF"/><rect x="978.10" y="412" width="6.3" height="10" fill="#00BFFF"/><rect x="987.95" y="385" width="2.6" height="27" fill="#00BFFF"/><rect x="986.10" y="387" width="6.3" height="15" fill="#00BFFF"/><rect x="995.95" y="377" width="2.6" height="25" fill="#00BFFF"/><rect x="994.10" y="386" width="6.3" height="14" fill="#00BFFF"/><rect x="1004.25" y="410" width="2.0" height="14" fill="#707070"/><rect x="1003.65" y="412" width="3.2" height="8" fill="#707070"/><rect x="1011.95" y="440" width="2.6" height="69" fill="#EE82EE"/><rect x="1010.10" y="442" width="6.3" height="65" fill="#EE82EE"/><rect x="1019.95" y="466" width="2.6" height="41" fill="#EE82EE"/><rect x="1018.10" y="482" width="6.3" height="15" fill="#EE82EE"/><rect x="1027.95" y="476" width="2.6" height="46" fill="#EE82EE"/><rect x="1026.10" y="480" width="6.3" height="12" fill="#EE82EE"/><rect x="1035.95" y="482" width="2.6" height="33" fill="#EE82EE"/><rect x="1034.10" y="492" width="6.3" height="13" fill="#EE82EE"/><rect x="1043.95" y="494" width="2.6" height="68" fill="#EE82EE"/><rect x="1042.10" y="504" width="6.3" height="56" fill="#EE82EE"/><rect x="1051.95" y="534" width="2.6" height="33" fill="#EE82EE"/><rect x="1050.10" y="541" width="6.3" height="9" fill="#EE82EE"/><rect x="1059.95" y="545" width="2.6" height="64" fill="#EE82EE"/><rect x="1058.10" y="547" width="6.3" height="60" fill="#EE82EE"/><rect x="1067.95" y="586" width="2.6" height="44" fill="#EE82EE"/><rect x="1066.10" y="595" width="6.3" height="27" fill="#EE82EE"/><rect x="1075.95" y="597" width="2.6" height="37" fill="#EE82EE"/><rect x="1074.10" y="605" width="6.3" height="23" fill="#EE82EE"/><rect x="1083.95" y="541" width="2.6" height="61" fill="#EE82EE"/><rect x="1082.10" y="547" width="6.3" height="53" fill="#EE82EE"/><rect x="1091.95" y="536" width="2.6" height="29" fill="#EE82EE"/><rect x="1090.10" y="544" width="6.3" height="8" fill="#EE82EE"/><rect x="1099.95" y="540" width="2.6" height="25" fill="#EE82EE"/><rect x="1098.10" y="542" width="6.3" height="15" fill="#EE82EE"/><rect x="1107.95" y="500" width="2.6" height="62" fill="#707070"/><rect x="1106.10" y="505" width="6.3" height="55" fill="#707070"/><rect x="1116.25" y="462" width="2.0" height="43" fill="#707070"/><rect x="1115.65" y="475" width="3.2" height="25" fill="#707070"/><rect x="1123.95" y="447" width="2.6" height="53" fill="#00BFFF"/><rect x="1122.10" y="454" width="6.3" height="27" fill="#00BFFF"/><rect x="1131.95" y="431" width="2.6" height="46" fill="#00BFFF"/><rect x="1130.10" y="450" width="6.3" height="11" fill="#00BFFF"/><rect x="1139.95" y="457" width="2.6" height="73" fill="#00BFFF"/><rect x="1138.10" y="460" width="6.3" height="67" fill="#00BFFF"/><rect x="1147.95" y="500" width="2.6" height="22" fill="#00BFFF"/><rect x="1146.10" y="508" width="6.3" height="8" fill="#00BFFF"/><rect x="1155.95" y="482" width="2.6" height="43" fill="#00BFFF"/><rect x="1154.10" y="490" width="6.3" height="17" fill="#00BFFF"/><rect x="1163.95" y="487" width="2.6" height="32" fill="#00BFFF"/><rect x="1162.10" y="489" width="6.3" height="11" fill="#00BFFF"/><rect x="1171.95" y="457" width="2.6" height="53" fill="#00BFFF"/><rect x="1170.10" y="466" width="6.3" height="34" fill="#00BFFF"/><rect x="1179.95" y="416" width="2.6" height="51" fill="#00BFFF"/><rect x="1178.10" y="445" width="6.3" height="22" fill="#00BFFF"/><rect x="1187.95" y="377" width="2.6" height="68" fill="#00BFFF"/><rect x="1186.10" y="425" width="6.3" height="19" fill="#00BFFF"/><rect x="1195.95" y="386" width="2.6" height="44" fill="#00BFFF"/><rect x="1194.10" y="410" width="6.3" height="18" fill="#00BFFF"/><rect x="1203.95" y="397" width="2.6" height="42" fill="#00BFFF"/><rect x="1202.10" y="406" width="6.3" height="6" fill="#00BFFF"/><rect x="1211.95" y="397" width="2.6" height="32" fill="#00BFFF"/><rect x="1210.10" y="410" width="6.3" height="10" fill="#00BFFF"/><rect x="1219.95" y="392" width="2.6" height="45" fill="#00BFFF"/><rect x="1218.10" y="408" width="6.3" height="4" fill="#00BFFF"/><rect x="1227.95" y="358" width="2.6" height="50" fill="#00BFFF"/><rect x="1226.10" y="377" width="6.3" height="30" fill="#00BFFF"/><rect x="1235.95" y="356" width="2.6" height="53" fill="#00BFFF"/><rect x="1234.10" y="375" width="6.3" height="32" fill="#00BFFF"/><rect x="1243.95" y="405" width="2.6" height="42" fill="#707070"/><rect x="1242.10" y="407" width="6.3" height="39" fill="#707070"/><rect x="1251.95" y="415" width="2.6" height="35" fill="#707070"/><rect x="1250.10" y="418" width="6.3" height="28" fill="#707070"/><rect x="1260.25" y="410" width="2.0" height="26" fill="#707070"/><rect x="1259.65" y="412" width="3.2" height="18" fill="#707070"/><rect x="1267.95" y="410" width="2.6" height="55" fill="#707070"/><rect x="1266.10" y="410" width="6.3" height="13" fill="#707070"/><rect x="1276.25" y="404" width="2.0" height="37" fill="#707070"/><rect x="1275.65" y="408" width="3.2" height="28" fill="#707070"/><rect x="1284.25" y="414" width="2.0" height="18" fill="#707070"/><rect x="1283.65" y="416" width="3.2" height="14" fill="#707070"/><rect x="1292.25" y="401" width="2.0" height="28" fill="#707070"/><rect x="1291.65" y="404" width="3.2" height="22" fill="#707070"/><rect x="1300.25" y="413" width="2.0" height="22" fill="#707070"/><rect x="1299.65" y="415" width="3.2" height="17" fill="#707070"/><rect x="1307.95" y="413" width="2.6" height="21" fill="#707070"/><rect x="1306.10" y="415" width="6.3" height="17" fill="#707070"/><rect x="1315.95" y="356" width="2.6" height="36" fill="#00BFFF"/><rect x="1314.10" y="380" width="6.3" height="4" fill="#00BFFF"/><rect x="1323.95" y="366" width="2.6" height="32" fill="#00BFFF"/><rect x="1322.10" y="380" width="6.3" height="17" fill="#00BFFF"/><rect x="1331.95" y="391" width="2.6" height="17" fill="#00BFFF"/><rect x="1330.10" y="393" width="6.3" height="5" fill="#00BFFF"/><rect x="1339.95" y="387" width="2.6" height="30" fill="#00BFFF"/><rect x="1338.10" y="393" width="6.3" height="19" fill="#00BFFF"/><rect x="1347.95" y="393" width="2.6" height="22" fill="#00BFFF"/><rect x="1346.10" y="395" width="6.3" height="17" fill="#00BFFF"/><rect x="1355.95" y="391" width="2.6" height="27" fill="#00BFFF"/><rect x="1354.10" y="393" width="6.3" height="6" fill="#00BFFF"/><rect x="1363.95" y="366" width="2.6" height="30" fill="#00BFFF"/><rect x="1362.10" y="380" width="6.3" height="13" fill="#00BFFF"/><rect x="1371.95" y="382" width="2.6" height="36" fill="#707070"/><rect x="1370.10" y="385" width="6.3" height="28" fill="#707070"/><rect x="1380.25" y="405" width="2.0" height="35" fill="#707070"/><rect x="1379.65" y="412" width="3.2" height="18" fill="#707070"/><rect x="1388.25" y="408" width="2.0" height="29" fill="#707070"/><rect x="1387.65" y="413" width="3.2" height="15" fill="#707070"/><rect x="1395.95" y="383" width="2.6" height="25" fill="#00BFFF"/><rect x="1394.10" y="387" width="6.3" height="20" fill="#00BFFF"/><rect x="1403.95" y="383" width="2.6" height="20" fill="#00BFFF"/><rect x="1402.10" y="386" width="6.3" height="8" fill="#00BFFF"/><rect x="1411.95" y="369" width="2.6" height="34" fill="#00BFFF"/><rect x="1410.10" y="392" width="6.3" height="6" fill="#00BFFF"/><rect x="1419.95" y="384" width="2.6" height="52" fill="#707070"/><rect x="1418.10" y="386" width="6.3" height="47" fill="#707070"/><rect x="1427.95" y="415" width="2.6" height="30" fill="#707070"/><rect x="1426.10" y="422" width="6.3" height="18" fill="#707070"/><rect x="1436.25" y="392" width="2.0" height="14" fill="#707070"/><rect x="1435.65" y="394" width="3.2" height="10" fill="#707070"/><rect x="1444.25" y="396" width="2.0" height="16" fill="#707070"/><rect x="1443.65" y="399" width="3.2" height="9" fill="#707070"/><rect x="1451.95" y="331" width="2.6" height="65" fill="#00BFFF"/><rect x="1450.10" y="375" width="6.3" height="19" fill="#00BFFF"/><rect x="1459.95" y="354" width="2.6" height="41" fill="#00BFFF"/><rect x="1458.10" y="368" width="6.3" height="27" fill="#00BFFF"/><rect x="1467.95" y="336" width="2.6" height="31" fill="#00BFFF"/><rect x="1466.10" y="357" width="6.3" height="9" fill="#00BFFF"/><rect x="1475.95" y="287" width="2.6" height="80" fill="#00BFFF"/><rect x="1474.10" y="292" width="6.3" height="64" fill="#00BFFF"/>
<polyline points="8.0,296.0 29.0,362.0 157.0,200.0 308.0,504.0 380.0,371.0 412.0,488.0 581.0,135.0 684.5,384.0 717.0,281.0 764.5,529.0 869.0,366.0 900.0,485.0 957.0,351.0 1069.0,636.0 1228.5,339.0 1244.5,475.0 1316.0,347.0 1428.0,453.0 1477.5,282.0" fill="none" stroke="#fff" stroke-width="7" stroke-linejoin="round"/>
<line x1="89.85" y1="290" x2="128.40" y2="290" stroke="#FF4500" stroke-width="6" stroke-dasharray="6.5 1.5"/>
<line x1="129.85" y1="290" x2="184.40" y2="290" stroke="#00FF00" stroke-width="6" stroke-dasharray="6.5 1.5"/>
<line x1="185.85" y1="290" x2="272.40" y2="290" stroke="#FF4500" stroke-width="6" stroke-dasharray="6.5 1.5"/>
<line x1="273.85" y1="396" x2="456.40" y2="396" stroke="#FF4500" stroke-width="6" stroke-dasharray="6.5 1.5"/>
<line x1="457.85" y1="426" x2="640.40" y2="426" stroke="#00FF00" stroke-width="6" stroke-dasharray="6.5 1.5"/>
<line x1="641.85" y1="297.5" x2="648.40" y2="297.5" stroke="#00FF00" stroke-width="6" stroke-dasharray="6.5 1.5"/>
<line x1="649.85" y1="297.5" x2="824.40" y2="297.5" stroke="#FF4500" stroke-width="6" stroke-dasharray="6.5 1.5"/>
<line x1="825.85" y1="454" x2="1008.40" y2="454" stroke="#00FF00" stroke-width="6" stroke-dasharray="6.5 1.5"/>
<line x1="1009.85" y1="440" x2="1184.40" y2="440" stroke="#FF4500" stroke-width="6" stroke-dasharray="6.5 1.5"/>
<line x1="1185.85" y1="440" x2="1192.40" y2="440" stroke="#00FF00" stroke-width="6" stroke-dasharray="6.5 1.5"/>
<line x1="1193.85" y1="420" x2="1208.40" y2="420" stroke="#FF4500" stroke-width="6" stroke-dasharray="6.5 1.5"/>
<line x1="1209.85" y1="420" x2="1240.40" y2="420" stroke="#00FF00" stroke-width="6" stroke-dasharray="6.5 1.5"/>
<line x1="1241.85" y1="420" x2="1288.40" y2="420" stroke="#FF4500" stroke-width="6" stroke-dasharray="6.5 1.5"/>
<line x1="1289.85" y1="420" x2="1296.40" y2="420" stroke="#00FF00" stroke-width="6" stroke-dasharray="6.5 1.5"/>
<line x1="1297.85" y1="420" x2="1312.40" y2="420" stroke="#FF4500" stroke-width="6" stroke-dasharray="6.5 1.5"/>
<line x1="1313.85" y1="420" x2="1360.40" y2="420" stroke="#00FF00" stroke-width="6" stroke-dasharray="6.5 1.5"/>
<line x1="1377.85" y1="412.5" x2="1384.40" y2="412.5" stroke="#00FF00" stroke-width="6" stroke-dasharray="6.5 1.5"/>
<line x1="1385.85" y1="412.5" x2="1392.40" y2="412.5" stroke="#FF4500" stroke-width="6" stroke-dasharray="6.5 1.5"/>
<line x1="1393.85" y1="412.5" x2="1400.40" y2="412.5" stroke="#00FF00" stroke-width="6" stroke-dasharray="6.5 1.5"/>
<line x1="1449.85" y1="415" x2="1480.40" y2="415" stroke="#00FF00" stroke-width="6" stroke-dasharray="6.5 1.5"/>
<polyline points="197.5,109.0 203.2,111.2 211.2,114.3 220.6,117.9 230.7,121.9 240.8,126.0 250.0,130.0 258.5,133.9 266.9,138.1 275.2,142.3 283.4,146.6 291.7,150.8 300.0,155.0 308.3,159.1 316.7,163.2 325.0,167.3 333.3,171.3 341.7,175.2 350.0,179.0 358.5,182.6 367.1,186.1 375.8,189.6 384.3,192.9 392.4,196.0 400.0,199.0 406.9,201.8 413.3,204.4 419.3,206.9 425.2,209.3 431.2,211.6 437.5,214.0 443.9,216.5 450.2,219.0 456.6,221.5 463.4,223.9 470.8,225.9 479.0,227.5 488.6,228.6 499.5,229.3 511.0,229.7 522.4,229.9 533.2,230.0 542.5,230.0 550.3,229.9 557.1,229.7 563.2,229.3 568.8,228.8 574.3,228.4 580.0,228.0 585.4,227.6 590.3,227.0 595.0,226.5 600.0,226.0 605.7,225.8 612.5,226.0 620.7,226.6 630.1,227.5 640.2,228.6 650.5,229.9 660.6,231.2 670.0,232.5 678.9,233.8 687.7,235.3 696.2,236.8 704.5,238.2 712.5,239.7 720.0,241.0 727.0,242.1 733.4,243.1 739.5,243.9 745.5,244.9 751.4,246.0 757.5,247.5 763.6,249.3 769.5,251.5 775.5,253.8 781.6,256.2 788.0,258.6 795.0,261.0 802.6,263.3 810.7,265.6 819.2,268.0 827.9,270.3 836.5,272.7 845.0,275.0 853.4,277.4 861.9,279.8 870.3,282.2 878.7,284.6 887.0,286.9 895.0,289.0 903.0,291.0 911.1,292.9 919.1,294.7 926.7,296.3 933.7,297.8 940.0,299.0 945.1,299.9 949.1,300.5 952.5,300.8 955.9,301.2 959.9,301.7 965.0,302.5 971.5,303.6 979.1,304.9 987.2,306.3 995.4,307.9 1003.1,309.4 1010.0,311.0 1015.9,312.6 1021.3,314.2 1026.2,315.8 1030.9,317.5 1035.5,319.2 1040.0,321.0 1044.5,322.8 1048.7,324.8 1052.8,326.8 1056.9,328.7 1060.9,330.7 1065.0,332.5 1069.2,334.3 1073.3,336.0 1077.5,337.8 1081.7,339.4 1085.8,341.0 1090.0,342.5 1094.2,343.9 1098.3,345.3 1102.5,346.6 1106.7,347.8 1110.8,349.0 1115.0,350.0 1119.2,350.9 1123.3,351.7 1127.5,352.4 1131.7,353.1 1135.8,353.8 1140.0,354.5 1144.2,355.3 1148.3,356.1 1152.5,356.9 1156.7,357.8 1160.8,358.6 1165.0,359.5 1168.9,360.4 1172.4,361.3 1175.9,362.2 1179.8,363.2 1184.4,364.1 1190.0,365.0 1196.9,365.9 1204.8,366.7 1213.4,367.6 1222.4,368.4 1231.4,369.2 1240.0,370.0 1248.3,370.7 1256.7,371.5 1265.0,372.2 1273.3,372.9 1281.7,373.5 1290.0,374.0 1298.0,374.4 1305.6,374.7 1313.1,374.9 1321.1,375.2 1329.9,375.5 1340.0,376.0 1352.0,376.7 1365.9,377.6 1380.5,378.6 1395.1,379.6 1408.5,380.4 1420.0,381.0 1429.4,381.3 1437.6,381.4 1444.7,381.4 1451.0,381.3 1456.5,381.1 1461.7,381.0 1466.3,380.9 1470.2,380.7 1473.5,380.5 1476.1,380.3 1478.3,380.1 1480.0,380.0" fill="none" stroke="#0c141c" stroke-width="6.3" stroke-linejoin="round" stroke-linecap="round"/>
<polyline points="197.5,109.0 203.2,111.2 211.2,114.3 220.6,117.9 230.7,121.9 240.8,126.0 250.0,130.0 258.5,133.9 266.9,138.1 275.2,142.3 283.4,146.6 291.7,150.8 300.0,155.0 308.3,159.1 316.7,163.2 325.0,167.3 333.3,171.3 341.7,175.2 350.0,179.0 358.5,182.6 367.1,186.1 375.8,189.6 384.3,192.9 392.4,196.0 400.0,199.0 406.9,201.8 413.3,204.4 419.3,206.9 425.2,209.3 431.2,211.6 437.5,214.0 443.9,216.5 450.2,219.0 456.6,221.5 463.4,223.9 470.8,225.9 479.0,227.5 488.6,228.6 499.5,229.3 511.0,229.7 522.4,229.9 533.2,230.0 542.5,230.0" fill="none" stroke="#FF69B4" stroke-width="3.7" stroke-linejoin="round" stroke-linecap="butt"/>
<polyline points="542.5,230.0 550.3,229.9 557.1,229.7 563.2,229.3 568.8,228.8 574.3,228.4 580.0,228.0 585.4,227.6 590.3,227.0 595.0,226.5 600.0,226.0 605.7,225.8 612.5,226.0" fill="none" stroke="#1E90FF" stroke-width="3.7" stroke-linejoin="round" stroke-linecap="butt"/>
<polyline points="612.5,226.0 620.7,226.6 630.1,227.5 640.2,228.6 650.5,229.9 660.6,231.2 670.0,232.5 678.9,233.8 687.7,235.3 696.2,236.8 704.5,238.2 712.5,239.7 720.0,241.0 727.0,242.1 733.4,243.1 739.5,243.9 745.5,244.9 751.4,246.0 757.5,247.5 763.6,249.3 769.5,251.5 775.5,253.8 781.6,256.2 788.0,258.6 795.0,261.0 802.6,263.3 810.7,265.6 819.2,268.0 827.9,270.3 836.5,272.7 845.0,275.0 853.4,277.4 861.9,279.8 870.3,282.2 878.7,284.6 887.0,286.9 895.0,289.0 903.0,291.0 911.1,292.9 919.1,294.7 926.7,296.3 933.7,297.8 940.0,299.0 945.1,299.9 949.1,300.5 952.5,300.8 955.9,301.2 959.9,301.7 965.0,302.5 971.5,303.6 979.1,304.9 987.2,306.3 995.4,307.9 1003.1,309.4 1010.0,311.0 1015.9,312.6 1021.3,314.2 1026.2,315.8 1030.9,317.5 1035.5,319.2 1040.0,321.0 1044.5,322.8 1048.7,324.8 1052.8,326.8 1056.9,328.7 1060.9,330.7 1065.0,332.5 1069.2,334.3 1073.3,336.0 1077.5,337.8 1081.7,339.4 1085.8,341.0 1090.0,342.5 1094.2,343.9 1098.3,345.3 1102.5,346.6 1106.7,347.8 1110.8,349.0 1115.0,350.0 1119.2,350.9 1123.3,351.7 1127.5,352.4 1131.7,353.1 1135.8,353.8 1140.0,354.5 1144.2,355.3 1148.3,356.1 1152.5,356.9 1156.7,357.8 1160.8,358.6 1165.0,359.5 1168.9,360.4 1172.4,361.3 1175.9,362.2 1179.8,363.2 1184.4,364.1 1190.0,365.0 1196.9,365.9 1204.8,366.7 1213.4,367.6 1222.4,368.4 1231.4,369.2 1240.0,370.0 1248.3,370.7 1256.7,371.5 1265.0,372.2 1273.3,372.9 1281.7,373.5 1290.0,374.0 1298.0,374.4 1305.6,374.7 1313.1,374.9 1321.1,375.2 1329.9,375.5 1340.0,376.0 1352.0,376.7 1365.9,377.6 1380.5,378.6 1395.1,379.6 1408.5,380.4 1420.0,381.0 1429.4,381.3 1437.6,381.4 1444.7,381.4 1451.0,381.3 1456.5,381.1 1461.7,381.0" fill="none" stroke="#FF69B4" stroke-width="3.7" stroke-linejoin="round" stroke-linecap="butt"/>
<polyline points="1461.7,381.0 1466.3,380.9 1470.2,380.7 1473.5,380.5 1476.1,380.3 1478.3,380.1 1480.0,380.0" fill="none" stroke="#1E90FF" stroke-width="3.7" stroke-linejoin="round" stroke-linecap="butt"/>
<polyline points="12.5,192.5 14.4,194.6 16.9,197.5 20.0,200.9 23.3,204.7 26.7,208.6 30.0,212.5 33.2,216.5 36.6,220.8 40.0,225.3 43.4,229.7 46.8,233.9 50.0,237.5 53.0,240.7 55.9,243.5 58.8,246.0 61.6,248.4 64.5,250.5 67.5,252.5 70.7,254.3 74.0,255.9 77.3,257.3 80.7,258.6 84.1,259.8 87.5,261.0 90.9,262.2 94.2,263.4 97.6,264.6 100.9,265.6 104.3,266.6 107.5,267.5 110.7,268.3 113.9,269.1 117.1,269.9 120.2,270.5 123.2,270.9 126.0,271.0 128.6,270.9 131.0,270.5 133.2,269.9 135.4,269.2 137.7,268.4 140.0,267.5 142.4,266.4 144.8,265.0 147.3,263.5 149.8,262.1 152.3,260.9 155.0,260.0 157.8,259.5 160.8,259.3 163.9,259.2 166.9,259.4 169.8,259.6 172.5,260.0 174.8,260.5 176.9,261.1 178.9,261.9 180.8,262.8 182.8,263.8 185.0,265.0 187.4,266.3 189.8,267.9 192.3,269.5 194.9,271.3 197.5,273.1 200.0,275.0 202.5,276.9 205.0,278.8 207.5,280.8 210.0,282.9 212.5,285.1 215.0,287.5 217.4,290.1 219.8,293.0 222.2,295.9 224.6,299.0 227.2,302.0 230.0,305.0 233.0,308.0 236.3,311.0 239.7,314.1 243.1,317.0 246.6,319.9 250.0,322.5 253.3,324.7 256.7,326.6 260.0,328.3 263.3,330.1 266.7,332.3 270.0,335.0 273.3,338.6 276.6,342.8 279.8,347.3 283.1,351.9 286.5,356.3 290.0,360.0 293.6,363.1 297.4,365.9 301.2,368.4 305.1,370.7 308.9,372.8 312.5,375.0 315.9,377.0 319.3,378.9 322.5,380.6 325.7,382.3 329.1,384.0 332.5,386.0 336.2,388.3 340.1,390.9 344.1,393.5 348.0,396.1 351.7,398.3 355.0,400.0 357.9,401.1 360.5,401.7 362.8,402.0 365.1,402.2 367.4,402.3 370.0,402.5 372.8,402.7 375.6,402.8 378.6,402.9 381.6,403.0 384.6,403.4 387.5,404.0 390.4,405.0 393.3,406.4 396.2,407.9 399.2,409.5 402.1,411.1 405.0,412.5 408.0,413.9 411.2,415.3 414.4,416.7 417.4,418.0 420.2,419.1 422.5,420.0 424.2,420.6 425.3,420.9 426.1,421.0 426.9,421.1 428.1,421.0 430.0,421.0 432.6,420.9 435.8,420.8 439.4,420.6 443.1,420.4 446.7,420.2 450.0,420.0 453.1,419.9 456.2,419.8 459.3,419.8 462.2,419.6 465.0,419.4 467.5,419.0 469.7,418.5 471.7,418.0 473.5,417.4 475.3,416.6 477.1,415.5 479.0,414.0 481.1,412.0 483.2,409.6 485.4,406.8 487.6,403.9 489.8,400.9 492.0,398.0 494.1,395.1 496.3,392.2 498.4,389.3 500.5,386.3 502.7,383.2 505.0,380.0 507.3,376.9 509.5,373.9 511.8,370.8 514.2,367.5 516.9,363.8 520.0,359.5 523.6,354.5 527.6,348.9 531.9,342.8 536.3,336.7 540.7,330.7 545.0,325.0 549.2,319.7 553.3,314.5 557.5,309.4 561.7,304.5 565.8,299.7 570.0,295.0 574.3,290.4 578.7,285.7 583.1,281.2 587.4,277.0 591.4,273.2 595.0,270.0 598.1,267.4 600.9,265.2 603.4,263.5 605.7,262.1 607.9,261.0 610.0,260.0 611.8,259.2 613.3,258.7 614.7,258.5 616.1,258.5 617.8,258.7 620.0,259.0 622.8,259.5 625.9,260.3 629.4,261.3 633.0,262.4 636.6,263.7 640.0,265.0 643.3,266.4 646.6,267.9 649.8,269.6 653.1,271.3 656.5,273.1 660.0,275.0 663.7,277.0 667.5,279.1 671.4,281.2 675.3,283.4 679.0,285.5 682.5,287.5 685.7,289.4 688.6,291.3 691.4,293.1 694.2,294.8 697.0,296.3 700.0,297.5 703.2,298.3 706.5,298.7 709.8,298.9 713.2,299.1 716.6,299.4 720.0,300.0 723.4,300.9 726.8,301.9 730.2,303.0 733.5,304.3 736.8,305.8 740.0,307.5 743.1,309.5 746.1,311.9 749.1,314.4 751.9,317.0 754.8,319.8 757.5,322.5 760.1,325.2 762.7,328.1 765.2,330.9 767.6,333.9 770.0,336.9 772.5,340.0 775.0,343.2 777.5,346.7 780.0,350.2 782.5,353.6 785.0,356.9 787.5,360.0 790.0,362.8 792.4,365.5 794.8,368.0 797.3,370.4 799.9,372.7 802.5,375.0 805.3,377.3 808.1,379.5 811.1,381.7 814.1,383.8 817.1,385.7 820.0,387.5 822.9,389.1 825.9,390.5 828.8,391.7 831.7,392.9 834.6,394.0 837.5,395.0 840.2,396.0 842.6,397.1 845.1,398.0 847.6,398.9 850.6,399.5 854.0,400.0 858.2,400.1 863.2,399.9 868.5,399.5 873.7,399.1 878.5,398.9 882.5,399.0 885.4,399.5 887.6,400.2 889.3,401.1 890.9,402.1 892.7,403.1 895.0,404.0 897.9,404.9 901.2,405.7 904.7,406.6 908.2,407.4 911.7,408.3 915.0,409.0 918.2,409.7 921.4,410.4 924.5,411.1 927.4,411.6 930.1,412.1 932.5,412.5 934.3,412.7 935.6,412.9 936.7,412.9 937.7,412.8 939.1,412.7 941.0,412.5 943.5,412.2 946.3,411.8 949.5,411.4 952.8,410.9 956.4,410.4 960.0,410.0 963.9,409.6 968.1,409.3 972.5,409.0 976.9,408.6 981.1,408.3 985.0,408.0 988.5,407.5 991.8,406.7 994.9,406.0 997.9,405.5 1000.9,405.4 1004.0,406.0 1007.1,407.4 1010.2,409.4 1013.3,411.9 1016.4,414.7 1019.5,417.4 1022.5,420.0 1025.5,422.4 1028.5,424.8 1031.5,427.3 1034.4,429.8 1037.2,432.3 1040.0,435.0 1042.6,437.7 1045.2,440.6 1047.7,443.4 1050.1,446.4 1052.5,449.4 1055.0,452.5 1057.5,455.7 1060.0,459.1 1062.5,462.6 1065.0,466.0 1067.5,469.3 1070.0,472.5 1072.5,475.5 1074.9,478.5 1077.3,481.4 1079.8,484.1 1082.4,486.7 1085.0,489.0 1087.8,491.1 1090.7,493.1 1093.8,495.0 1096.8,496.6 1099.7,497.9 1102.5,499.0 1105.1,499.8 1107.6,500.3 1110.0,500.6 1112.4,500.6 1114.9,500.4 1117.5,500.0 1120.3,499.1 1123.1,497.8 1126.1,496.2 1129.1,494.6 1132.1,493.3 1135.0,492.5 1137.9,492.4 1140.8,492.7 1143.8,493.3 1146.7,494.0 1149.6,494.6 1152.5,495.0 1155.4,495.3 1158.2,495.6 1161.1,495.8 1164.0,495.8 1166.9,495.6 1170.0,495.0 1173.1,494.0 1176.3,492.7 1179.5,491.1 1182.9,489.3 1186.3,487.2 1190.0,485.0 1193.9,482.5 1198.1,479.6 1202.3,476.6 1206.7,473.4 1210.9,470.4 1215.0,467.5 1218.8,464.8 1222.5,462.0 1226.1,459.3 1229.7,456.8 1233.5,454.5 1237.5,452.5 1241.8,450.9 1246.4,449.7 1251.1,448.7 1255.8,447.8 1260.5,447.0 1265.0,446.0 1269.5,444.9 1274.0,443.8 1278.4,442.7 1282.6,441.6 1286.6,440.7 1290.0,440.0 1292.8,439.6 1295.1,439.5 1297.0,439.6 1298.8,439.6 1300.7,439.5 1303.0,439.0 1305.4,438.2 1307.8,437.0 1310.2,435.8 1313.0,434.4 1316.2,433.0 1320.0,431.7 1324.6,430.4 1329.8,429.1 1335.5,427.8 1341.4,426.5 1347.3,425.2 1353.0,424.0 1358.6,422.9 1364.2,421.7 1369.8,420.7 1375.5,419.7 1381.1,418.8 1386.7,418.0 1392.4,417.4 1398.1,417.1 1403.9,416.8 1409.5,416.6 1414.9,416.3 1420.0,415.8 1424.7,415.2 1429.1,414.5 1433.2,413.7 1437.2,412.9 1441.1,411.9 1445.0,410.8 1448.9,409.5 1452.9,408.0 1456.7,406.3 1460.4,404.6 1463.7,403.1 1466.7,401.7 1469.3,400.5 1471.7,399.3 1473.7,398.2 1475.5,397.2 1476.9,396.4 1478.0,395.8" fill="none" stroke="#0c141c" stroke-width="8.6" stroke-linejoin="round" stroke-linecap="round"/>
<polyline points="12.5,192.5 14.4,194.6 16.9,197.5 20.0,200.9 23.3,204.7 26.7,208.6 30.0,212.5 33.2,216.5 36.6,220.8 40.0,225.3 43.4,229.7 46.8,233.9 50.0,237.5 53.0,240.7 55.9,243.5 58.8,246.0 61.6,248.4 64.5,250.5 67.5,252.5 70.7,254.3 74.0,255.9 77.3,257.3 80.7,258.6 84.1,259.8 87.5,261.0 90.9,262.2 94.2,263.4 97.6,264.6 100.9,265.6 104.3,266.6 107.5,267.5 110.7,268.3 113.9,269.1 117.1,269.9 120.2,270.5 123.2,270.9 126.0,271.0" fill="none" stroke="#FF69B4" stroke-width="5.8" stroke-linejoin="round" stroke-linecap="butt"/>
<polyline points="126.0,271.0 128.6,270.9 131.0,270.5 133.2,269.9 135.4,269.2 137.7,268.4 140.0,267.5 142.4,266.4 144.8,265.0 147.3,263.5 149.8,262.1 152.3,260.9 155.0,260.0 157.8,259.5 160.8,259.3 163.9,259.2 166.9,259.4 169.8,259.6 172.5,260.0" fill="none" stroke="#1E90FF" stroke-width="5.8" stroke-linejoin="round" stroke-linecap="butt"/>
<polyline points="172.5,260.0 174.8,260.5 176.9,261.1 178.9,261.9 180.8,262.8 182.8,263.8 185.0,265.0 187.4,266.3 189.8,267.9 192.3,269.5 194.9,271.3 197.5,273.1 200.0,275.0 202.5,276.9 205.0,278.8 207.5,280.8 210.0,282.9 212.5,285.1 215.0,287.5 217.4,290.1 219.8,293.0 222.2,295.9 224.6,299.0 227.2,302.0 230.0,305.0 233.0,308.0 236.3,311.0 239.7,314.1 243.1,317.0 246.6,319.9 250.0,322.5 253.3,324.7 256.7,326.6 260.0,328.3 263.3,330.1 266.7,332.3 270.0,335.0 273.3,338.6 276.6,342.8 279.8,347.3 283.1,351.9 286.5,356.3 290.0,360.0 293.6,363.1 297.4,365.9 301.2,368.4 305.1,370.7 308.9,372.8 312.5,375.0 315.9,377.0 319.3,378.9 322.5,380.6 325.7,382.3 329.1,384.0 332.5,386.0 336.2,388.3 340.1,390.9 344.1,393.5 348.0,396.1 351.7,398.3 355.0,400.0 357.9,401.1 360.5,401.7 362.8,402.0 365.1,402.2 367.4,402.3 370.0,402.5 372.8,402.7 375.6,402.8 378.6,402.9 381.6,403.0 384.6,403.4 387.5,404.0 390.4,405.0 393.3,406.4 396.2,407.9 399.2,409.5 402.1,411.1 405.0,412.5 408.0,413.9 411.2,415.3 414.4,416.7 417.4,418.0 420.2,419.1 422.5,420.0 424.2,420.6 425.3,420.9 426.1,421.0 426.9,421.1 428.1,421.0 430.0,421.0" fill="none" stroke="#FF69B4" stroke-width="5.8" stroke-linejoin="round" stroke-linecap="butt"/>
<polyline points="430.0,421.0 432.6,420.9 435.8,420.8 439.4,420.6 443.1,420.4 446.7,420.2 450.0,420.0 453.1,419.9 456.2,419.8 459.3,419.8 462.2,419.6 465.0,419.4 467.5,419.0 469.7,418.5 471.7,418.0 473.5,417.4 475.3,416.6 477.1,415.5 479.0,414.0 481.1,412.0 483.2,409.6 485.4,406.8 487.6,403.9 489.8,400.9 492.0,398.0 494.1,395.1 496.3,392.2 498.4,389.3 500.5,386.3 502.7,383.2 505.0,380.0 507.3,376.9 509.5,373.9 511.8,370.8 514.2,367.5 516.9,363.8 520.0,359.5 523.6,354.5 527.6,348.9 531.9,342.8 536.3,336.7 540.7,330.7 545.0,325.0 549.2,319.7 553.3,314.5 557.5,309.4 561.7,304.5 565.8,299.7 570.0,295.0 574.3,290.4 578.7,285.7 583.1,281.2 587.4,277.0 591.4,273.2 595.0,270.0 598.1,267.4 600.9,265.2 603.4,263.5 605.7,262.1 607.9,261.0 610.0,260.0 611.8,259.2 613.3,258.7 614.7,258.5 616.1,258.5 617.8,258.7 620.0,259.0" fill="none" stroke="#1E90FF" stroke-width="5.8" stroke-linejoin="round" stroke-linecap="butt"/>
<polyline points="620.0,259.0 622.8,259.5 625.9,260.3 629.4,261.3 633.0,262.4 636.6,263.7 640.0,265.0 643.3,266.4 646.6,267.9 649.8,269.6 653.1,271.3 656.5,273.1 660.0,275.0 663.7,277.0 667.5,279.1 671.4,281.2 675.3,283.4 679.0,285.5 682.5,287.5 685.7,289.4 688.6,291.3 691.4,293.1 694.2,294.8 697.0,296.3 700.0,297.5 703.2,298.3 706.5,298.7 709.8,298.9 713.2,299.1 716.6,299.4 720.0,300.0 723.4,300.9 726.8,301.9 730.2,303.0 733.5,304.3 736.8,305.8 740.0,307.5 743.1,309.5 746.1,311.9 749.1,314.4 751.9,317.0 754.8,319.8 757.5,322.5 760.1,325.2 762.7,328.1 765.2,330.9 767.6,333.9 770.0,336.9 772.5,340.0 775.0,343.2 777.5,346.7 780.0,350.2 782.5,353.6 785.0,356.9 787.5,360.0 790.0,362.8 792.4,365.5 794.8,368.0 797.3,370.4 799.9,372.7 802.5,375.0 805.3,377.3 808.1,379.5 811.1,381.7 814.1,383.8 817.1,385.7 820.0,387.5 822.9,389.1 825.9,390.5 828.8,391.7 831.7,392.9 834.6,394.0 837.5,395.0 840.2,396.0 842.6,397.1 845.1,398.0 847.6,398.9 850.6,399.5 854.0,400.0" fill="none" stroke="#FF69B4" stroke-width="5.8" stroke-linejoin="round" stroke-linecap="butt"/>
<polyline points="854.0,400.0 858.2,400.1 863.2,399.9 868.5,399.5 873.7,399.1 878.5,398.9 882.5,399.0" fill="none" stroke="#1E90FF" stroke-width="5.8" stroke-linejoin="round" stroke-linecap="butt"/>
<polyline points="882.5,399.0 885.4,399.5 887.6,400.2 889.3,401.1 890.9,402.1 892.7,403.1 895.0,404.0 897.9,404.9 901.2,405.7 904.7,406.6 908.2,407.4 911.7,408.3 915.0,409.0 918.2,409.7 921.4,410.4 924.5,411.1 927.4,411.6 930.1,412.1 932.5,412.5 934.3,412.7 935.6,412.9 936.7,412.9 937.7,412.8 939.1,412.7 941.0,412.5" fill="none" stroke="#FF69B4" stroke-width="5.8" stroke-linejoin="round" stroke-linecap="butt"/>
<polyline points="941.0,412.5 943.5,412.2 946.3,411.8 949.5,411.4 952.8,410.9 956.4,410.4 960.0,410.0 963.9,409.6 968.1,409.3 972.5,409.0 976.9,408.6 981.1,408.3 985.0,408.0 988.5,407.5 991.8,406.7 994.9,406.0 997.9,405.5 1000.9,405.4 1004.0,406.0" fill="none" stroke="#1E90FF" stroke-width="5.8" stroke-linejoin="round" stroke-linecap="butt"/>
<polyline points="1004.0,406.0 1007.1,407.4 1010.2,409.4 1013.3,411.9 1016.4,414.7 1019.5,417.4 1022.5,420.0 1025.5,422.4 1028.5,424.8 1031.5,427.3 1034.4,429.8 1037.2,432.3 1040.0,435.0 1042.6,437.7 1045.2,440.6 1047.7,443.4 1050.1,446.4 1052.5,449.4 1055.0,452.5 1057.5,455.7 1060.0,459.1 1062.5,462.6 1065.0,466.0 1067.5,469.3 1070.0,472.5 1072.5,475.5 1074.9,478.5 1077.3,481.4 1079.8,484.1 1082.4,486.7 1085.0,489.0 1087.8,491.1 1090.7,493.1 1093.8,495.0 1096.8,496.6 1099.7,497.9 1102.5,499.0 1105.1,499.8 1107.6,500.3 1110.0,500.6 1112.4,500.6 1114.9,500.4 1117.5,500.0" fill="none" stroke="#FF69B4" stroke-width="5.8" stroke-linejoin="round" stroke-linecap="butt"/>
<polyline points="1117.5,500.0 1120.3,499.1 1123.1,497.8 1126.1,496.2 1129.1,494.6 1132.1,493.3 1135.0,492.5 1137.9,492.4 1140.8,492.7 1143.8,493.3 1146.7,494.0 1149.6,494.6 1152.5,495.0 1155.4,495.3 1158.2,495.6 1161.1,495.8 1164.0,495.8 1166.9,495.6 1170.0,495.0 1173.1,494.0 1176.3,492.7 1179.5,491.1 1182.9,489.3 1186.3,487.2 1190.0,485.0 1193.9,482.5 1198.1,479.6 1202.3,476.6 1206.7,473.4 1210.9,470.4 1215.0,467.5 1218.8,464.8 1222.5,462.0 1226.1,459.3 1229.7,456.8 1233.5,454.5 1237.5,452.5 1241.8,450.9 1246.4,449.7 1251.1,448.7 1255.8,447.8 1260.5,447.0 1265.0,446.0 1269.5,444.9 1274.0,443.8 1278.4,442.7 1282.6,441.6 1286.6,440.7 1290.0,440.0 1292.8,439.6 1295.1,439.5 1297.0,439.6 1298.8,439.6 1300.7,439.5 1303.0,439.0 1305.4,438.2 1307.8,437.0 1310.2,435.8 1313.0,434.4 1316.2,433.0 1320.0,431.7 1324.6,430.4 1329.8,429.1 1335.5,427.8 1341.4,426.5 1347.3,425.2 1353.0,424.0 1358.6,422.9 1364.2,421.7 1369.8,420.7 1375.5,419.7 1381.1,418.8 1386.7,418.0 1392.4,417.4 1398.1,417.1 1403.9,416.8 1409.5,416.6 1414.9,416.3 1420.0,415.8 1424.7,415.2 1429.1,414.5 1433.2,413.7 1437.2,412.9 1441.1,411.9 1445.0,410.8 1448.9,409.5 1452.9,408.0 1456.7,406.3 1460.4,404.6 1463.7,403.1 1466.7,401.7 1469.3,400.5 1471.7,399.3 1473.7,398.2 1475.5,397.2 1476.9,396.4 1478.0,395.8" fill="none" stroke="#1E90FF" stroke-width="5.8" stroke-linejoin="round" stroke-linecap="butt"/>
<polyline points="12.5,244.0 13.8,246.8 15.6,250.7 17.8,255.3 20.2,260.3 22.6,265.3 25.0,270.0 27.4,274.6 29.8,279.3 32.3,284.1 34.9,288.8 37.5,293.3 40.0,297.5 42.6,301.4 45.2,305.2 47.8,308.8 50.4,312.0 52.8,315.0 55.0,317.5 57.0,319.5 58.9,321.2 60.6,322.4 62.2,323.4 63.7,324.3 65.0,325.0 66.0,325.6 66.7,326.0 67.2,326.3 67.8,326.4 68.6,326.3 70.0,326.0" fill="none" stroke="#8B0000" stroke-width="3.5" stroke-linejoin="round" stroke-linecap="butt"/>
<polyline points="70.0,326.0 71.9,325.6 74.3,324.9 76.9,324.1 79.6,323.1 82.4,322.1 85.0,321.0 87.6,319.8 90.2,318.4 92.8,316.9 95.4,315.4 97.8,313.9 100.0,312.5 101.9,311.2 103.5,309.9 105.0,308.7 106.5,307.5 108.1,306.2 110.0,305.0 112.3,303.8 114.8,302.7 117.5,301.6 120.2,300.4 122.7,299.0 125.0,297.5 126.9,295.8 128.5,294.1 130.0,292.2 131.5,290.1 133.1,287.7 135.0,285.0 137.3,281.7 139.8,277.8 142.5,273.6 145.2,269.4 147.7,265.6 150.0,262.5 151.9,260.0 153.6,257.9 155.2,256.2 156.7,254.7 158.2,253.5 160.0,252.5 161.9,251.6 164.0,251.0 166.1,250.6 168.2,250.4 170.4,250.5 172.5,251.0" fill="none" stroke="#00008B" stroke-width="3.5" stroke-linejoin="round" stroke-linecap="butt"/>
<polyline points="172.5,251.0 174.6,251.8 176.8,253.0 178.9,254.5 181.0,256.2 183.1,258.0 185.0,260.0 186.8,262.0 188.4,264.2 190.0,266.5 191.6,269.0 193.2,271.9 195.0,275.0 196.9,278.5 199.0,282.4 201.1,286.6 203.2,290.9 205.4,295.4 207.5,300.0 209.6,304.7 211.6,309.6 213.6,314.7 215.6,319.8 217.8,324.9 220.0,330.0 222.4,335.1 224.8,340.3 227.3,345.5 229.9,350.6 232.5,355.4 235.0,360.0 237.4,364.3 239.8,368.3 242.2,372.2 244.6,375.8 247.2,379.3 250.0,382.5 253.1,385.4 256.4,388.0 259.8,390.3 263.3,392.6 266.8,394.9 270.0,397.5 273.1,400.2 276.0,403.1 278.9,405.9 281.8,408.9 284.6,411.9 287.5,415.0 290.5,418.3 293.5,421.9 296.6,425.5 299.5,429.0 302.4,432.2 305.0,435.0 307.3,437.4 309.4,439.5 311.4,441.4 313.3,443.0 315.3,444.2 317.5,445.0" fill="none" stroke="#8B0000" stroke-width="3.5" stroke-linejoin="round" stroke-linecap="butt"/>
<polyline points="317.5,445.0 319.9,445.2 322.3,444.8 324.8,444.1 327.4,443.2 330.0,442.6 332.5,442.5 335.0,443.0 337.6,444.0 340.2,445.2 342.7,446.3 345.1,447.2 347.5,447.5 349.7,447.3 351.8,446.8 353.8,446.0 355.7,445.0 357.8,443.8 360.0,442.5 362.4,441.0 364.9,439.1 367.5,437.1 370.1,435.0 372.6,433.0 375.0,431.0 377.2,428.9 379.4,426.7 381.4,424.4 383.4,422.4 385.4,420.8 387.5,420.0" fill="none" stroke="#00008B" stroke-width="3.5" stroke-linejoin="round" stroke-linecap="butt"/>
<polyline points="387.5,420.0 389.6,419.9 391.6,420.5 393.6,421.5 395.6,422.9 397.8,424.4 400.0,426.0 402.4,427.8 404.9,430.0 407.4,432.4 410.0,434.9 412.5,437.1 415.0,439.0 417.4,440.7 419.9,442.4 422.2,443.8 424.6,445.0 426.9,445.8 429.0,446.0" fill="none" stroke="#8B0000" stroke-width="3.5" stroke-linejoin="round" stroke-linecap="butt"/>
<polyline points="429.0,446.0 431.0,445.5 432.9,444.2 434.8,442.6 436.5,440.8 438.3,439.0 440.0,437.5 441.7,436.2 443.3,435.0 444.9,433.8 446.5,432.8 448.2,431.8 450.0,431.0 452.0,430.5 454.1,430.4 456.2,430.3 458.4,430.2 460.5,429.8 462.5,429.0 464.4,427.8 466.1,426.3 467.9,424.5 469.5,422.5 471.1,420.2 472.5,417.5 473.7,414.5 474.7,411.3 475.5,407.8 476.4,403.9 477.6,399.6 479.0,395.0 480.8,389.8 482.9,384.1 485.2,378.0 487.6,371.7 490.1,365.5 492.5,359.5 494.8,353.8 497.0,348.3 499.3,342.8 501.7,337.2 504.4,331.3 507.5,325.0 511.1,318.0 515.1,310.6 519.4,302.8 523.8,295.0 528.2,287.3 532.5,280.0 536.8,272.8 541.1,265.6 545.5,258.4 549.7,251.7 553.8,245.5 557.5,240.0 560.9,235.5 564.0,231.9 566.9,228.8 569.6,225.9 572.3,223.1 575.0,220.0 577.7,216.6 580.3,213.0 582.8,209.4 585.3,206.0 587.7,202.8 590.0,200.0 592.3,197.5 594.7,195.3 597.0,193.3 599.2,191.6 601.0,190.2 602.5,189.0" fill="none" stroke="#00008B" stroke-width="3.5" stroke-linejoin="round" stroke-linecap="butt"/>
<polyline points="602.5,189.0 603.4,188.2 603.8,187.7 603.9,187.5 604.0,187.6 604.3,187.7 605.0,188.0 606.2,188.3 607.8,188.7 609.5,189.2 611.4,190.0 613.2,191.1 615.0,192.5 616.6,194.2 618.1,196.1 619.7,198.2 621.3,200.8 623.0,203.9 625.0,207.5 627.2,212.0 629.7,217.3 632.3,223.1 635.0,229.1 637.6,234.8 640.0,240.0 642.2,244.7 644.4,249.1 646.4,253.3 648.4,257.3 650.4,261.2 652.5,265.0 654.6,268.6 656.6,271.9 658.6,275.0 660.6,278.1 662.8,281.4 665.0,285.0 667.4,289.0 669.9,293.2 672.5,297.7 675.1,302.0 677.6,306.2 680.0,310.0 682.2,313.5 684.3,316.8 686.2,319.8 688.2,322.7 690.3,325.2 692.5,327.5 694.9,329.5 697.5,331.2 700.2,332.6 702.8,333.7 705.3,334.5 707.5,335.0 709.5,334.9 711.2,334.3 712.8,333.4 714.4,332.4 715.9,331.5 717.5,331.0 719.1,330.9 720.7,331.1 722.3,331.4 724.0,331.8 725.7,332.2 727.5,332.5 729.4,332.7 731.5,332.7 733.6,332.7 735.7,332.9 737.9,333.3 740.0,334.0 742.1,335.1 744.4,336.5 746.6,338.1 748.7,339.9 750.7,341.9 752.5,344.0 754.0,346.2 755.4,348.6 756.6,351.2 757.7,354.0 758.8,356.9 760.0,360.0 761.2,363.3 762.2,366.8 763.3,370.5 764.4,374.4 765.8,378.4 767.5,382.5 769.6,386.8 771.9,391.3 774.5,395.9 777.2,400.6 779.9,405.4 782.5,410.0 785.0,414.7 787.6,419.5 790.2,424.4 792.7,429.1 795.1,433.5 797.5,437.5 799.7,441.1 801.9,444.5 803.9,447.7 805.9,450.5 807.9,452.9 810.0,455.0 812.1,456.7 814.2,458.0 816.2,458.9 818.3,459.5 820.4,459.9 822.5,460.0" fill="none" stroke="#8B0000" stroke-width="3.5" stroke-linejoin="round" stroke-linecap="butt"/>
<polyline points="822.5,460.0 824.6,459.8 826.8,459.2 828.9,458.4 831.0,457.3 833.1,456.2 835.0,455.0 836.8,453.7 838.4,452.2 840.0,450.6 841.6,448.9 843.2,447.4 845.0,446.0 846.9,444.9 849.0,444.1 851.1,443.4 853.2,442.6 855.4,441.5 857.5,440.0 859.6,438.0 861.6,435.7 863.7,433.1 865.7,430.4 867.8,427.7 870.0,425.0 872.3,422.2 874.7,419.0 877.1,415.8 879.5,412.9 881.8,410.5 884.0,409.0" fill="none" stroke="#00008B" stroke-width="3.5" stroke-linejoin="round" stroke-linecap="butt"/>
<polyline points="884.0,409.0 886.0,408.4 887.9,408.6 889.8,409.3 891.5,410.3 893.3,411.5 895.0,412.5 896.7,413.6 898.2,414.8 899.8,416.2 901.3,417.6 903.1,418.9 905.0,420.0 907.2,420.9 909.7,421.7 912.2,422.3 914.9,422.9 917.5,423.5 920.0,424.0 922.4,424.5 924.7,425.1 926.9,425.6 929.2,426.0 931.6,426.2 934.0,426.0" fill="none" stroke="#8B0000" stroke-width="3.5" stroke-linejoin="round" stroke-linecap="butt"/>
<polyline points="934.0,426.0 936.6,425.5 939.2,424.8 941.9,423.9 944.7,422.8 947.4,421.5 950.0,420.0 952.5,418.2 954.9,416.0 957.2,413.6 959.7,411.2 962.2,409.1 965.0,407.5 968.1,406.4 971.6,405.7 975.2,405.2 978.7,404.9 982.0,404.5 985.0,404.0 987.6,403.3 989.9,402.5 992.0,401.7 994.0,401.0 995.8,400.4 997.5,400.0" fill="none" stroke="#00008B" stroke-width="3.5" stroke-linejoin="round" stroke-linecap="butt"/>
<polyline points="997.5,400.0 999.0,399.7 1000.3,399.4 1001.4,399.2 1002.5,399.3 1003.7,399.9 1005.0,401.0 1006.5,402.7 1008.0,404.9 1009.5,407.6 1011.2,410.6 1013.0,413.9 1015.0,417.5 1017.2,421.4 1019.6,425.9 1022.2,430.6 1024.8,435.4 1027.4,440.3 1030.0,445.0 1032.5,449.6 1035.1,454.1 1037.7,458.6 1040.2,463.1 1042.6,467.8 1045.0,472.5 1047.3,477.4 1049.4,482.4 1051.6,487.5 1053.6,492.6 1055.6,497.6 1057.5,502.5 1059.3,507.3 1061.1,511.9 1062.8,516.6 1064.4,521.1 1065.9,525.6 1067.5,530.0 1069.0,534.5 1070.4,539.1 1071.8,543.6 1073.2,547.9 1074.6,551.7 1076.0,555.0 1077.4,557.6 1078.6,559.7 1079.9,561.4 1081.4,562.8 1083.0,563.9 1085.0,565.0 1087.5,566.0 1090.5,566.9 1093.7,567.5 1096.9,567.9 1099.9,567.9 1102.5,567.5" fill="none" stroke="#8B0000" stroke-width="3.5" stroke-linejoin="round" stroke-linecap="butt"/>
<polyline points="1102.5,567.5 1104.6,566.7 1106.3,565.6 1107.8,564.2 1109.3,562.4 1110.8,560.2 1112.5,557.5 1114.4,554.1 1116.5,550.1 1118.6,545.6 1120.7,541.0 1122.9,536.6 1125.0,532.5 1127.1,528.8 1129.1,525.1 1131.1,521.6 1133.1,518.2 1135.3,515.2 1137.5,512.5 1139.8,510.2 1142.2,508.3 1144.7,506.7 1147.2,505.3 1149.8,503.9 1152.5,502.5 1155.3,501.2 1158.3,500.2 1161.4,499.2 1164.4,498.1 1167.3,496.8 1170.0,495.0 1172.3,492.7 1174.4,490.1 1176.4,487.2 1178.3,484.1 1180.3,480.8 1182.5,477.5 1184.8,474.1 1187.0,470.5 1189.4,466.7 1191.9,462.9 1194.5,459.0 1197.5,455.0 1200.9,450.9 1204.7,446.7 1208.7,442.3 1212.7,438.1 1216.5,433.9 1220.0,430.0 1223.1,426.1 1226.1,422.2 1228.8,418.4 1231.4,414.9 1233.8,412.1 1236.0,410.0" fill="none" stroke="#00008B" stroke-width="3.5" stroke-linejoin="round" stroke-linecap="butt"/>
<polyline points="1236.0,410.0 1237.9,408.9 1239.4,408.6 1240.8,408.9 1242.1,409.5 1243.4,410.3 1245.0,411.0 1246.8,411.7 1248.6,412.6 1250.6,413.6 1252.6,414.7 1254.6,415.7 1256.7,416.7 1258.8,417.6 1260.9,418.6 1263.0,419.5 1265.3,420.4 1267.6,421.1 1270.0,421.7 1272.6,422.1 1275.4,422.2 1278.4,422.3 1281.3,422.3 1284.1,422.3 1286.7,422.5 1289.2,422.8 1291.5,423.3 1293.8,423.8 1295.9,424.3 1298.0,424.7 1300.0,425.0 1301.9,425.3 1303.7,425.6 1305.4,425.8 1307.0,425.8 1308.6,425.6 1310.0,425.0" fill="none" stroke="#8B0000" stroke-width="3.5" stroke-linejoin="round" stroke-linecap="butt"/>
<polyline points="1310.0,425.0 1311.3,423.9 1312.4,422.3 1313.3,420.4 1314.3,418.5 1315.4,416.6 1316.7,415.0 1318.1,413.6 1319.6,412.3 1321.1,411.1 1322.8,409.9 1324.6,408.9 1326.7,408.0 1329.1,407.3 1331.8,406.7 1334.6,406.2 1337.5,405.8 1340.4,405.4 1343.0,405.0 1345.5,404.6 1348.0,404.3 1350.4,404.1 1352.7,403.8 1354.8,403.4 1356.7,403.0 1358.3,402.4 1359.5,401.6 1360.6,400.8 1361.7,400.0 1362.8,399.4 1364.0,399.0" fill="none" stroke="#00008B" stroke-width="3.5" stroke-linejoin="round" stroke-linecap="butt"/>
<polyline points="1364.0,399.0 1365.4,398.9 1366.9,398.9 1368.5,399.1 1370.1,399.3 1371.6,399.7 1373.0,400.0 1374.3,400.4 1375.4,400.8 1376.6,401.3 1377.7,401.8 1378.8,402.4 1380.0,403.0 1381.2,403.7 1382.3,404.6 1383.5,405.5 1384.8,406.3 1386.2,407.0 1388.0,407.5" fill="none" stroke="#8B0000" stroke-width="3.5" stroke-linejoin="round" stroke-linecap="butt"/>
<polyline points="1388.0,407.5 1390.2,407.7 1392.7,407.7 1395.5,407.6 1398.2,407.4 1400.8,407.1 1403.0,406.7 1404.8,406.2 1406.4,405.5 1407.8,404.8 1409.1,404.1 1410.3,403.4 1411.7,403.0" fill="none" stroke="#00008B" stroke-width="3.5" stroke-linejoin="round" stroke-linecap="butt"/>
<polyline points="1411.7,403.0 1413.1,402.7 1414.6,402.5 1416.0,402.4 1417.4,402.4 1418.7,402.6 1420.0,403.0 1421.2,403.7 1422.2,404.7 1423.2,405.9 1424.3,407.1 1425.4,408.2 1426.7,409.0 1428.2,409.5 1429.8,409.9 1431.5,410.1 1433.3,410.2 1435.0,410.1 1436.7,410.0 1438.2,409.8 1439.7,409.4 1441.2,409.0 1442.7,408.4 1444.2,407.6 1445.8,406.7" fill="none" stroke="#8B0000" stroke-width="3.5" stroke-linejoin="round" stroke-linecap="butt"/>
<polyline points="1445.8,406.7 1447.5,405.6 1449.3,404.4 1451.1,403.0 1453.0,401.4 1454.8,399.8 1456.7,398.0 1458.6,396.1 1460.5,394.0 1462.4,391.7 1464.4,389.5 1466.2,387.2 1468.0,385.0 1469.8,382.7 1471.7,380.3 1473.5,377.9 1475.1,375.7 1476.5,373.9 1477.5,372.5" fill="none" stroke="#00008B" stroke-width="3.5" stroke-linejoin="round" stroke-linecap="butt"/>
<line x1="724" y1="332.3" x2="731" y2="332.3" stroke="#00008B" stroke-width="3.5"/>
<g font-family='"Liberation Sans","Noto Sans CJK SC",sans-serif' font-weight="bold" font-size="66"><g fill="#0a1018" transform="translate(1.5,1.5)" clip-path="url(#cOne)"><text x="450" y="182.5" textLength="41" lengthAdjust="spacingAndGlyphs">v</text><text x="512" y="182.5" textLength="152" lengthAdjust="spacingAndGlyphs">M15</text></g><g fill="#00BFFF" stroke="#00BFFF" stroke-width="1.2" clip-path="url(#cOne)"><text x="450" y="182.5" textLength="41" lengthAdjust="spacingAndGlyphs">v</text><text x="512" y="182.5" textLength="152" lengthAdjust="spacingAndGlyphs">M15</text></g></g>
<text x="1316" y="149.5" font-size="15" font-weight="bold" fill="#fff" font-family='"DejaVu Sans Mono","Liberation Mono",monospace' textLength="72.4" lengthAdjust="spacingAndGlyphs">138% ADR</text>
<text x="1316" y="227.7" font-size="15" font-weight="bold" fill="#fff" font-family='"DejaVu Sans Mono","Liberation Mono",monospace' textLength="72.4" lengthAdjust="spacingAndGlyphs">100% ADR</text>
<text x="1307.5" y="304.5" font-size="15" font-weight="bold" fill="#fff" font-family='"DejaVu Sans Mono","Liberation Mono",monospace' textLength="90.5" lengthAdjust="spacingAndGlyphs">61.85% ADR</text>
<text x="1307.5" y="351.5" font-size="15" font-weight="bold" fill="#fff" font-family='"DejaVu Sans Mono","Liberation Mono",monospace' textLength="90.5" lengthAdjust="spacingAndGlyphs">38.25% ADR</text>
<text x="1307.5" y="380.7" font-size="15" font-weight="bold" fill="#fff" font-family='"DejaVu Sans Mono","Liberation Mono",monospace' textLength="90.5" lengthAdjust="spacingAndGlyphs">23.65% ADR</text>
<text x="1307.5" y="408.2" font-size="15" font-weight="bold" fill="#fff" font-family='"DejaVu Sans Mono","Liberation Mono",monospace' textLength="90.5" lengthAdjust="spacingAndGlyphs">10.00% ADR</text>
<text x="1307.5" y="448.0" font-size="15" font-weight="bold" fill="#fff" font-family='"DejaVu Sans Mono","Liberation Mono",monospace' textLength="90.5" lengthAdjust="spacingAndGlyphs">10.00% ADR</text>
<text x="1307.5" y="476.0" font-size="15" font-weight="bold" fill="#fff" font-family='"DejaVu Sans Mono","Liberation Mono",monospace' textLength="90.5" lengthAdjust="spacingAndGlyphs">23.65% ADR</text>
<text x="1307.5" y="505.2" font-size="15" font-weight="bold" fill="#fff" font-family='"DejaVu Sans Mono","Liberation Mono",monospace' textLength="90.5" lengthAdjust="spacingAndGlyphs">38.25% ADR</text>
<text x="1307.5" y="553.0" font-size="15" font-weight="bold" fill="#fff" font-family='"DejaVu Sans Mono","Liberation Mono",monospace' textLength="90.5" lengthAdjust="spacingAndGlyphs">61.85% ADR</text>
<text x="1316" y="630.2" font-size="15" font-weight="bold" fill="#fff" font-family='"DejaVu Sans Mono","Liberation Mono",monospace' textLength="72.4" lengthAdjust="spacingAndGlyphs">100% ADR</text>
<text x="1316" y="427.8" font-size="13.5" font-weight="bold" fill="#fff" font-family='"DejaVu Sans","Liberation Sans",sans-serif' textLength="80" lengthAdjust="spacingAndGlyphs">OpenToday</text>
<text x="1485.5" y="126.5" font-size="18.8" font-weight="bold" fill="#1E88E0" font-family='"Liberation Sans","Noto Sans CJK SC",sans-serif'>+168%</text>
<text x="1485.5" y="176" font-size="18.8" font-weight="bold" fill="#1E88E0" font-family='"Liberation Sans","Noto Sans CJK SC",sans-serif'>+132%</text>
<text x="1485.5" y="219" font-size="18.8" font-weight="bold" fill="#1E88E0" font-family='"Liberation Sans","Noto Sans CJK SC",sans-serif'>+100%</text>
<text x="1493.5" y="262.6" font-size="18.8" font-weight="bold" fill="#1E88E0" font-family='"Liberation Sans","Noto Sans CJK SC",sans-serif'>+68%</text>
<text x="1493.5" y="311.6" font-size="18.8" font-weight="bold" fill="#1E88E0" font-family='"Liberation Sans","Noto Sans CJK SC",sans-serif'>+32%</text>
<text x="1492" y="354" font-size="18.8" font-weight="bold" fill="#1E88E0" font-family='"Liberation Sans","Noto Sans CJK SC",sans-serif'>yHIGH</text>
<text x="1501" y="399.3" font-size="18.8" font-weight="bold" fill="#1E88E0" font-family='"Liberation Sans","Noto Sans CJK SC",sans-serif'>68%</text>
<text x="1501" y="448.2" font-size="18.8" font-weight="bold" fill="#E8AAB8" font-family='"Liberation Sans","Noto Sans CJK SC",sans-serif'>32%</text>
<text x="1493" y="490.6" font-size="18.8" font-weight="bold" fill="#E8AAB8" font-family='"Liberation Sans","Noto Sans CJK SC",sans-serif'>yLOW</text>
<text x="1496" y="535" font-size="18.8" font-weight="bold" fill="#E8AAB8" font-family='"Liberation Sans","Noto Sans CJK SC",sans-serif'>-32%</text>
<text x="1496" y="583.6" font-size="18.8" font-weight="bold" fill="#E8AAB8" font-family='"Liberation Sans","Noto Sans CJK SC",sans-serif'>-68%</text>
<text x="1488" y="627.6" font-size="18.8" font-weight="bold" fill="#E8AAB8" font-family='"Liberation Sans","Noto Sans CJK SC",sans-serif'>-100%</text>
<text x="1551.5" y="153" font-size="19" font-style="italic" fill="#fff" font-family='"DejaVu Sans","Liberation Sans",sans-serif' textLength="50" lengthAdjust="spacingAndGlyphs">[4/8]</text>
<text x="1551.5" y="275.2" font-size="19" font-style="italic" fill="#00FF00" font-family='"DejaVu Sans","Liberation Sans",sans-serif' textLength="50" lengthAdjust="spacingAndGlyphs">[3/8]</text>
<text x="1551.5" y="400" font-size="19" font-style="italic" fill="#FF69B4" font-family='"DejaVu Sans","Liberation Sans",sans-serif' textLength="50" lengthAdjust="spacingAndGlyphs">[2/8]</text>
<text x="1554" y="524.4" font-size="19" font-style="italic" fill="#FFFF00" font-family='"DejaVu Sans","Liberation Sans",sans-serif' textLength="50" lengthAdjust="spacingAndGlyphs">[1/8]</text>
<text x="1551.5" y="647.4" font-size="19" font-style="italic" fill="#00BFFF" font-family='"DejaVu Sans","Liberation Sans",sans-serif' textLength="50" lengthAdjust="spacingAndGlyphs">[0/8]</text>
<rect x="265" y="623.5" width="86" height="24" fill="#8B0000"/><text x="308" y="640" font-size="10.5" fill="#CD5C5C" text-anchor="middle" font-family='"Liberation Sans","Noto Sans CJK SC",sans-serif'>SEMAFOR</text>
<path d="M1490 109 h8 l-4 4z" fill="#fff"/>
</g>
<rect x="1764.5" y="128.5" width="93" height="353.5" fill="#fffafa"/>
<rect x="1769.5" y="133" width="83" height="164.5" fill="#1C2632"/>
<rect x="1769.5" y="331.5" width="83" height="146.5" fill="#1C2632"/>
<text x="1847.5" y="176.7" font-size="19.5" font-weight="bold" fill="#00FFFF" stroke="#00FFFF" stroke-width="1.1" text-anchor="end" font-family='"Liberation Sans","DejaVu Sans",sans-serif' textLength="117" lengthAdjust="spacingAndGlyphs">6172.0000</text>
<text x="1848" y="192.6" font-size="14.5" font-weight="bold" fill="#fff" text-anchor="end" font-family='"DejaVu Sans Mono","Liberation Mono",monospace' textLength="61" lengthAdjust="spacingAndGlyphs">SPD:0.2</text>
<text x="1847.5" y="209" font-size="17" font-weight="bold" fill="#00FF00" stroke="#00FF00" stroke-width="1.1" text-anchor="end" font-family='"Liberation Sans","DejaVu Sans",sans-serif' textLength="38" lengthAdjust="spacingAndGlyphs">1:59</text>
<text x="1847.5" y="223.8" font-size="12.5" font-weight="bold" fill="#00FFFF" stroke="#00FFFF" stroke-width="0.7" text-anchor="end" font-family='"Liberation Sans","DejaVu Sans",sans-serif' textLength="75" lengthAdjust="spacingAndGlyphs">Daily Open</text>
<text x="1840" y="241.5" font-size="16.5" font-weight="bold" fill="#00FFFF" stroke="#00FFFF" stroke-width="0.9" text-anchor="end" font-family='"Liberation Sans","DejaVu Sans",sans-serif' textLength="93" lengthAdjust="spacingAndGlyphs">6091.0000</text>
<text x="1775" y="258.2" font-size="13.6" fill="#fff" font-family='"Liberation Sans","Noto Sans CJK SC",sans-serif'>P2Op</text>
<text x="1846.5" y="258.2" font-size="13.6" fill="#00FFFF" text-anchor="end" font-family='"Liberation Sans","Noto Sans CJK SC",sans-serif'>8</text>
<text x="1780" y="275" font-size="13.6" fill="#C0C0C0" font-family='"Liberation Sans","Noto Sans CJK SC",sans-serif'>HiLo</text>
<text x="1846.5" y="275" font-size="13.6" fill="#C0C0C0" text-anchor="end" font-family='"Liberation Sans","Noto Sans CJK SC",sans-serif'>11</text>
<text x="1781.5" y="292.2" font-size="13.6" fill="#fff" font-family='"Liberation Sans","Noto Sans CJK SC",sans-serif'>ADR</text>
<text x="1846.5" y="292.2" font-size="13.6" fill="#FF8C00" text-anchor="end" font-family='"Liberation Sans","Noto Sans CJK SC",sans-serif'>13</text>
<text x="1845" y="322" font-size="21.5" font-weight="bold" fill="#00FF00" text-anchor="end" font-family='"Liberation Sans","Noto Sans CJK SC",sans-serif'>97%</text>
<text x="1810.5" y="350.8" font-size="16.4" font-weight="bold" fill="#808080" text-anchor="middle" font-family='"Liberation Sans","Noto Sans CJK SC",sans-serif'>OpenPips</text>
<text x="1810.5" y="401.4" font-size="16.4" font-weight="bold" fill="#808080" text-anchor="middle" font-family='"Liberation Sans","Noto Sans CJK SC",sans-serif'>OpenPos</text>
<text x="1810.5" y="446.4" font-size="16.4" font-weight="bold" fill="#808080" text-anchor="middle" font-family='"Liberation Sans","Noto Sans CJK SC",sans-serif'>Daily P/L</text>
<text x="1847" y="377" font-size="20" fill="#1C2632" stroke="#8a8a8a" stroke-width="0.75" text-anchor="end" font-family='"Liberation Sans","Noto Sans CJK SC",sans-serif'>0.00</text>
<text x="1847" y="424.5" font-size="20" fill="#1C2632" stroke="#8a8a8a" stroke-width="0.75" text-anchor="end" font-family='"Liberation Sans","Noto Sans CJK SC",sans-serif'>0.00%</text>
<text x="1847" y="469.5" font-size="20" fill="#1C2632" stroke="#8a8a8a" stroke-width="0.75" text-anchor="end" font-family='"Liberation Sans","Noto Sans CJK SC",sans-serif'>0.00%</text>
<rect x="1788" y="481" width="68" height="37.5" rx="18" fill="#252d3a"/>
<line x1="1796" y1="499.7" x2="1852" y2="499.7" stroke="#161c26" stroke-width="1"/>
<circle cx="1767" cy="498" r="28.5" fill="#2b3340" stroke="#3a4250" stroke-width="1.5"/>
<path d="M1767 472.5 A25.5 25.5 0 0 1 1770 523.3" fill="none" stroke="#48c8b0" stroke-width="1.6"/><path d="M1791 506 A25.5 25.5 0 0 1 1770 523.3" fill="none" stroke="#b8d860" stroke-width="1.6"/>
<text x="1750.5" y="506.5" font-size="23" fill="#e8e8e8" font-family='"Liberation Sans","Noto Sans CJK SC",sans-serif'>48</text><text x="1776.5" y="506.5" font-size="9" fill="#e8e8e8" font-family='"Liberation Sans","Noto Sans CJK SC",sans-serif'>%</text>
<path d="M1803.5 491 v-5.5 m-2.5 2.5 l2.5 -2.8 l2.5 2.8" stroke="#38a8e8" stroke-width="1.3" fill="none"/><path d="M1803.5 505.5 v5.5 m-2.5 -2.5 l2.5 2.8 l2.5 -2.8" stroke="#28a838" stroke-width="1.3" fill="none"/>
<text x="1816.5" y="491.5" font-size="11" fill="#f0f0f0" font-family='"Liberation Sans","Noto Sans CJK SC",sans-serif'>0.1</text><text x="1833" y="491.5" font-size="8.5" fill="#c0c0c0" font-family='"Liberation Sans","Noto Sans CJK SC",sans-serif'>K/s</text>
<text x="1816.5" y="513" font-size="11" fill="#f0f0f0" font-family='"Liberation Sans","Noto Sans CJK SC",sans-serif'>0.1</text><text x="1833" y="513" font-size="8.5" fill="#c0c0c0" font-family='"Liberation Sans","Noto Sans CJK SC",sans-serif'>K/s</text>
<line x1="1867.5" y1="108" x2="1867.5" y2="987" stroke="#fff" stroke-width="1"/>
<line x1="1867" y1="125.6" x2="1871" y2="125.6" stroke="#fff"/>
<text x="1873" y="129.0" font-size="9.6" fill="#fff" font-family='"Liberation Sans","Noto Sans CJK SC",sans-serif'>6274</text>
<line x1="1867" y1="165.3" x2="1871" y2="165.3" stroke="#fff"/>
<text x="1873" y="168.70000000000002" font-size="9.6" fill="#fff" font-family='"Liberation Sans","Noto Sans CJK SC",sans-serif'>6249</text>
<line x1="1867" y1="205" x2="1871" y2="205" stroke="#fff"/>
<text x="1873" y="208.4" font-size="9.6" fill="#fff" font-family='"Liberation Sans","Noto Sans CJK SC",sans-serif'>6224</text>
<line x1="1867" y1="244.7" x2="1871" y2="244.7" stroke="#fff"/>
<text x="1873" y="248.1" font-size="9.6" fill="#fff" font-family='"Liberation Sans","Noto Sans CJK SC",sans-serif'>6199</text>
<line x1="1867" y1="324" x2="1871" y2="324" stroke="#fff"/>
<text x="1873" y="327.4" font-size="9.6" fill="#fff" font-family='"Liberation Sans","Noto Sans CJK SC",sans-serif'>6149</text>
<line x1="1867" y1="363.7" x2="1871" y2="363.7" stroke="#fff"/>
<text x="1873" y="367.09999999999997" font-size="9.6" fill="#fff" font-family='"Liberation Sans","Noto Sans CJK SC",sans-serif'>6124</text>
<line x1="1867" y1="402" x2="1871" y2="402" stroke="#fff"/>
<text x="1873" y="405.4" font-size="9.6" fill="#fff" font-family='"Liberation Sans","Noto Sans CJK SC",sans-serif'>6099</text>
<line x1="1867" y1="442.4" x2="1871" y2="442.4" stroke="#fff"/>
<text x="1873" y="445.79999999999995" font-size="9.6" fill="#fff" font-family='"Liberation Sans","Noto Sans CJK SC",sans-serif'>6074</text>
<line x1="1867" y1="481.6" x2="1871" y2="481.6" stroke="#fff"/>
<text x="1873" y="485.0" font-size="9.6" fill="#fff" font-family='"Liberation Sans","Noto Sans CJK SC",sans-serif'>6049</text>
<line x1="1867" y1="521" x2="1871" y2="521" stroke="#fff"/>
<text x="1873" y="524.4" font-size="9.6" fill="#fff" font-family='"Liberation Sans","Noto Sans CJK SC",sans-serif'>6024</text>
<line x1="1867" y1="560.7" x2="1871" y2="560.7" stroke="#fff"/>
<text x="1873" y="564.1" font-size="9.6" fill="#fff" font-family='"Liberation Sans","Noto Sans CJK SC",sans-serif'>5999</text>
<line x1="1867" y1="600.6" x2="1871" y2="600.6" stroke="#fff"/>
<text x="1873" y="604.0" font-size="9.6" fill="#fff" font-family='"Liberation Sans","Noto Sans CJK SC",sans-serif'>5974</text>
<line x1="1867" y1="640" x2="1871" y2="640" stroke="#fff"/>
<text x="1873" y="643.4" font-size="9.6" fill="#fff" font-family='"Liberation Sans","Noto Sans CJK SC",sans-serif'>5949</text>
<rect x="1868.5" y="282" width="29.5" height="11.5" fill="#fff"/><text x="1873" y="291.2" font-size="9.6" fill="#000" font-family='"Liberation Sans","Noto Sans CJK SC",sans-serif'>6172</text>
<line x1="12" y1="108.5" x2="1868" y2="108.5" stroke="#fff"/>
<line x1="12.5" y1="108" x2="12.5" y2="987" stroke="#fff"/>
<line x1="12" y1="648.5" x2="1868" y2="648.5" stroke="#fff"/><line x1="12" y1="650.5" x2="1868" y2="650.5" stroke="#fff"/>
<line x1="12" y1="767.5" x2="1868" y2="767.5" stroke="#fff"/><line x1="12" y1="769.5" x2="1868" y2="769.5" stroke="#fff"/>
<line x1="12" y1="986.5" x2="1868" y2="986.5" stroke="#fff"/>
<rect x="12" y="649" width="1857" height="1" fill="#16202C"/><rect x="12" y="768" width="1857" height="1" fill="#16202C"/>
<rect x="1810.5" y="95.5" width="67" height="61" fill="url(#gMini)" stroke="#3a3648" stroke-width="1"/>
<rect x="1811.5" y="96.5" width="65" height="59" fill="none" stroke="#fff" stroke-opacity="0.5"/>
<text x="1818.5" y="112.8" font-size="12" fill="#fff" stroke="#fff" stroke-width="2.5" stroke-opacity="0.3" font-family='"Liberation Sans","Noto Sans CJK SC",sans-serif'>Poin...</text><text x="1818.5" y="112.8" font-size="12" fill="#1a1a1a" font-family='"Liberation Sans","Noto Sans CJK SC",sans-serif'>Poin...</text>
<rect x="1854" y="100.8" width="17" height="17" rx="1.5" fill="#8a839c" stroke="#e0dcea" stroke-width="0.9"/><rect x="1853.2" y="100" width="18.6" height="18.6" rx="2" fill="none" stroke="#3a3648" stroke-width="0.8"/>
<path d="M1859.5 106.5 l6 6 m0 -6 l-6 6" stroke="#333" stroke-width="3"/><path d="M1859.5 106.5 l6 6 m0 -6 l-6 6" stroke="#fff" stroke-width="1.7"/>
<rect x="1815.5" y="120.5" width="57" height="31.5" fill="#f4f4f4" stroke="#2a2636"/>
<rect x="1816.5" y="121.5" width="55" height="30" fill="#f4f4f4" stroke="#000"/>
<rect x="1819.5" y="124.2" width="48.5" height="24.2" rx="3" fill="url(#gStart)" stroke="#28c8f8" stroke-width="2"/>
<text x="1843.7" y="142" font-size="12" fill="#000" text-anchor="middle" font-family='"Liberation Sans","Noto Sans CJK SC",sans-serif'>开始</text>
<g clip-path="url(#cMacd)">
<rect x="11.0" y="708.3" width="5" height="14.5" fill="#DAA520"/><rect x="19.0" y="708.3" width="5" height="19.5" fill="#DAA520"/><rect x="27.0" y="708.3" width="5" height="24.5" fill="#DAA520"/><rect x="35.0" y="708.3" width="5" height="26.0" fill="#DAA520"/><rect x="43.0" y="708.3" width="5" height="26.5" fill="#DAA520"/><rect x="51.0" y="708.3" width="5" height="22.0" fill="#8B4513"/><rect x="59.0" y="708.3" width="5" height="8.0" fill="#8B4513"/><rect x="67.0" y="702.3" width="5" height="6.0" fill="#7B68EE"/><rect x="75.0" y="695.3" width="5" height="13.0" fill="#7B68EE"/><rect x="83.0" y="690.3" width="5" height="18.0" fill="#7B68EE"/><rect x="91.0" y="685.3" width="5" height="23.0" fill="#7B68EE"/><rect x="99.0" y="684.3" width="5" height="24.0" fill="#7B68EE"/><rect x="107.0" y="686.3" width="5" height="22.0" fill="#7B68EE"/><rect x="115.0" y="689.3" width="5" height="19.0" fill="#483D8B"/><rect x="123.0" y="689.8" width="5" height="18.5" fill="#483D8B"/><rect x="131.0" y="687.8" width="5" height="20.5" fill="#7B68EE"/><rect x="139.0" y="682.3" width="5" height="26.0" fill="#7B68EE"/><rect x="147.0" y="675.3" width="5" height="33.0" fill="#7B68EE"/><rect x="155.0" y="673.3" width="5" height="35.0" fill="#7B68EE"/><rect x="163.0" y="682.3" width="5" height="26.0" fill="#483D8B"/><rect x="171.0" y="692.3" width="5" height="16.0" fill="#483D8B"/><rect x="179.0" y="708.3" width="5" height="4.5" fill="#DAA520"/><rect x="187.0" y="708.3" width="5" height="13.0" fill="#DAA520"/><rect x="195.0" y="708.3" width="5" height="19.5" fill="#DAA520"/><rect x="203.0" y="708.3" width="5" height="26.0" fill="#DAA520"/><rect x="211.0" y="708.3" width="5" height="29.5" fill="#DAA520"/><rect x="219.0" y="708.3" width="5" height="34.5" fill="#DAA520"/><rect x="227.0" y="708.3" width="5" height="34.5" fill="#DAA520"/><rect x="235.0" y="708.3" width="5" height="34.5" fill="#DAA520"/><rect x="243.0" y="708.3" width="5" height="27.0" fill="#8B4513"/><rect x="251.0" y="708.3" width="5" height="16.0" fill="#8B4513"/><rect x="259.0" y="708.3" width="5" height="9.0" fill="#8B4513"/><rect x="267.0" y="708.3" width="5" height="1.0" fill="#DAA520"/><rect x="275.0" y="708.3" width="5" height="6.5" fill="#8B4513"/><rect x="283.0" y="708.3" width="5" height="11.0" fill="#DAA520"/><rect x="291.0" y="708.3" width="5" height="14.0" fill="#DAA520"/><rect x="299.0" y="708.3" width="5" height="19.5" fill="#DAA520"/><rect x="307.0" y="708.3" width="5" height="14.5" fill="#8B4513"/><rect x="323.0" y="696.3" width="5" height="12.0" fill="#7B68EE"/><rect x="331.0" y="695.3" width="5" height="13.0" fill="#7B68EE"/><rect x="339.0" y="695.3" width="5" height="13.0" fill="#7B68EE"/><rect x="347.0" y="697.3" width="5" height="11.0" fill="#7B68EE"/><rect x="355.0" y="700.8" width="5" height="7.5" fill="#483D8B"/><rect x="363.0" y="694.3" width="5" height="14.0" fill="#7B68EE"/><rect x="371.0" y="686.3" width="5" height="22.0" fill="#7B68EE"/><rect x="379.0" y="681.3" width="5" height="27.0" fill="#7B68EE"/><rect x="387.0" y="685.3" width="5" height="23.0" fill="#7B68EE"/><rect x="395.0" y="697.3" width="5" height="11.0" fill="#483D8B"/><rect x="411.0" y="708.3" width="5" height="9.0" fill="#DAA520"/><rect x="419.0" y="708.3" width="5" height="10.0" fill="#DAA520"/><rect x="435.0" y="694.3" width="5" height="14.0" fill="#7B68EE"/><rect x="443.0" y="690.3" width="5" height="18.0" fill="#7B68EE"/><rect x="451.0" y="686.3" width="5" height="22.0" fill="#7B68EE"/><rect x="459.0" y="682.3" width="5" height="26.0" fill="#7B68EE"/><rect x="467.0" y="690.3" width="5" height="18.0" fill="#483D8B"/><rect x="475.0" y="682.8" width="5" height="25.5" fill="#7B68EE"/><rect x="483.0" y="667.3" width="5" height="41.0" fill="#7B68EE"/><rect x="491.0" y="660.3" width="5" height="48.0" fill="#7B68EE"/><rect x="499.0" y="657.3" width="5" height="51.0" fill="#7B68EE"/><rect x="507.0" y="661.3" width="5" height="47.0" fill="#7B68EE"/><rect x="515.0" y="673.3" width="5" height="35.0" fill="#483D8B"/><rect x="523.0" y="683.3" width="5" height="25.0" fill="#483D8B"/><rect x="531.0" y="683.3" width="5" height="25.0" fill="#483D8B"/><rect x="539.0" y="688.3" width="5" height="20.0" fill="#483D8B"/><rect x="547.0" y="690.3" width="5" height="18.0" fill="#483D8B"/><rect x="555.0" y="690.3" width="5" height="18.0" fill="#483D8B"/><rect x="563.0" y="695.3" width="5" height="13.0" fill="#483D8B"/><rect x="571.0" y="697.3" width="5" height="11.0" fill="#483D8B"/><rect x="579.0" y="695.3" width="5" height="13.0" fill="#483D8B"/><rect x="587.0" y="700.3" width="5" height="8.0" fill="#483D8B"/><rect x="595.0" y="702.3" width="5" height="6.0" fill="#483D8B"/><rect x="603.0" y="708.3" width="5" height="6.5" fill="#DAA520"/><rect x="611.0" y="708.3" width="5" height="14.5" fill="#DAA520"/><rect x="619.0" y="708.3" width="5" height="27.5" fill="#DAA520"/><rect x="627.0" y="708.3" width="5" height="41.0" fill="#DAA520"/><rect x="635.0" y="708.3" width="5" height="49.0" fill="#DAA520"/><rect x="643.0" y="708.3" width="5" height="53.0" fill="#DAA520"/><rect x="651.0" y="708.3" width="5" height="54.0" fill="#DAA520"/><rect x="659.0" y="708.3" width="5" height="48.0" fill="#8B4513"/><rect x="667.0" y="708.3" width="5" height="41.0" fill="#8B4513"/><rect x="675.0" y="708.3" width="5" height="41.0" fill="#8B4513"/><rect x="683.0" y="708.3" width="5" height="36.0" fill="#8B4513"/><rect x="691.0" y="708.3" width="5" height="31.5" fill="#8B4513"/><rect x="699.0" y="708.3" width="5" height="27.5" fill="#8B4513"/><rect x="707.0" y="708.3" width="5" height="19.0" fill="#8B4513"/><rect x="715.0" y="708.3" width="5" height="6.5" fill="#8B4513"/><rect x="723.0" y="708.3" width="5" height="6.5" fill="#8B4513"/><rect x="731.0" y="708.3" width="5" height="3.0" fill="#DAA520"/><rect x="739.0" y="708.3" width="5" height="5.0" fill="#DAA520"/><rect x="747.0" y="708.3" width="5" height="14.0" fill="#DAA520"/><rect x="755.0" y="708.3" width="5" height="19.5" fill="#DAA520"/><rect x="763.0" y="708.3" width="5" height="31.0" fill="#DAA520"/><rect x="771.0" y="708.3" width="5" height="29.5" fill="#DAA520"/><rect x="779.0" y="708.3" width="5" height="31.0" fill="#DAA520"/><rect x="787.0" y="708.3" width="5" height="31.5" fill="#DAA520"/><rect x="795.0" y="708.3" width="5" height="24.5" fill="#8B4513"/><rect x="803.0" y="708.3" width="5" height="24.0" fill="#8B4513"/><rect x="811.0" y="708.3" width="5" height="11.5" fill="#8B4513"/><rect x="827.0" y="701.3" width="5" height="7.0" fill="#7B68EE"/><rect x="835.0" y="696.3" width="5" height="12.0" fill="#7B68EE"/><rect x="843.0" y="690.3" width="5" height="18.0" fill="#7B68EE"/><rect x="851.0" y="689.3" width="5" height="19.0" fill="#7B68EE"/><rect x="859.0" y="683.3" width="5" height="25.0" fill="#7B68EE"/><rect x="867.0" y="680.3" width="5" height="28.0" fill="#7B68EE"/><rect x="875.0" y="681.3" width="5" height="27.0" fill="#7B68EE"/><rect x="883.0" y="683.3" width="5" height="25.0" fill="#483D8B"/><rect x="891.0" y="698.3" width="5" height="10.0" fill="#483D8B"/><rect x="939.0" y="701.3" width="5" height="7.0" fill="#7B68EE"/><rect x="947.0" y="695.3" width="5" height="13.0" fill="#7B68EE"/><rect x="955.0" y="690.3" width="5" height="18.0" fill="#7B68EE"/><rect x="963.0" y="690.3" width="5" height="18.0" fill="#7B68EE"/><rect x="971.0" y="699.3" width="5" height="9.0" fill="#483D8B"/><rect x="995.0" y="708.3" width="5" height="1.0" fill="#8B4513"/><rect x="1003.0" y="708.3" width="5" height="2.0" fill="#8B4513"/><rect x="1011.0" y="708.3" width="5" height="16.0" fill="#DAA520"/><rect x="1019.0" y="708.3" width="5" height="23.0" fill="#DAA520"/><rect x="1027.0" y="708.3" width="5" height="29.0" fill="#DAA520"/><rect x="1035.0" y="708.3" width="5" height="33.0" fill="#DAA520"/><rect x="1043.0" y="708.3" width="5" height="31.5" fill="#DAA520"/><rect x="1051.0" y="708.3" width="5" height="33.0" fill="#DAA520"/><rect x="1059.0" y="708.3" width="5" height="38.0" fill="#DAA520"/><rect x="1067.0" y="708.3" width="5" height="45.0" fill="#DAA520"/><rect x="1075.0" y="708.3" width="5" height="41.0" fill="#DAA520"/><rect x="1083.0" y="708.3" width="5" height="24.5" fill="#8B4513"/><rect x="1091.0" y="708.3" width="5" height="4.5" fill="#8B4513"/><rect x="1099.0" y="698.3" width="5" height="10.0" fill="#7B68EE"/><rect x="1107.0" y="689.3" width="5" height="19.0" fill="#7B68EE"/><rect x="1115.0" y="681.3" width="5" height="27.0" fill="#7B68EE"/><rect x="1123.0" y="672.3" width="5" height="36.0" fill="#7B68EE"/><rect x="1131.0" y="665.3" width="5" height="43.0" fill="#7B68EE"/><rect x="1139.0" y="673.3" width="5" height="35.0" fill="#7B68EE"/><rect x="1147.0" y="683.3" width="5" height="25.0" fill="#483D8B"/><rect x="1155.0" y="692.3" width="5" height="16.0" fill="#483D8B"/><rect x="1163.0" y="699.3" width="5" height="9.0" fill="#483D8B"/><rect x="1171.0" y="695.3" width="5" height="13.0" fill="#483D8B"/><rect x="1179.0" y="689.3" width="5" height="19.0" fill="#7B68EE"/><rect x="1187.0" y="682.3" width="5" height="26.0" fill="#7B68EE"/><rect x="1195.0" y="677.3" width="5" height="31.0" fill="#7B68EE"/><rect x="1203.0" y="677.3" width="5" height="31.0" fill="#7B68EE"/><rect x="1211.0" y="681.3" width="5" height="27.0" fill="#483D8B"/><rect x="1219.0" y="687.3" width="5" height="21.0" fill="#483D8B"/><rect x="1227.0" y="685.3" width="5" height="23.0" fill="#483D8B"/><rect x="1235.0" y="690.3" width="5" height="18.0" fill="#483D8B"/><rect x="1243.0" y="708.3" width="5" height="4.5" fill="#DAA520"/><rect x="1251.0" y="708.3" width="5" height="9.5" fill="#DAA520"/><rect x="1259.0" y="708.3" width="5" height="12.0" fill="#DAA520"/><rect x="1267.0" y="708.3" width="5" height="11.0" fill="#DAA520"/><rect x="1299.0" y="708.3" width="5" height="5.0" fill="#DAA520"/><rect x="1307.0" y="708.3" width="5" height="9.0" fill="#DAA520"/><rect x="1323.0" y="703.3" width="5" height="5.0" fill="#7B68EE"/><rect x="1331.0" y="703.3" width="5" height="5.0" fill="#7B68EE"/><rect x="1347.0" y="708.3" width="5" height="4.0" fill="#8B4513"/><rect x="1371.0" y="708.3" width="5" height="8.0" fill="#DAA520"/><rect x="1379.0" y="708.3" width="5" height="11.0" fill="#DAA520"/><rect x="1387.0" y="708.3" width="5" height="13.0" fill="#DAA520"/><rect x="1395.0" y="708.3" width="5" height="9.0" fill="#8B4513"/><rect x="1419.0" y="708.3" width="5" height="6.5" fill="#DAA520"/><rect x="1427.0" y="708.3" width="5" height="10.0" fill="#DAA520"/><rect x="1435.0" y="708.3" width="5" height="10.0" fill="#DAA520"/><rect x="1443.0" y="708.3" width="5" height="6.5" fill="#8B4513"/><rect x="1459.0" y="700.3" width="5" height="8.0" fill="#7B68EE"/><rect x="1467.0" y="697.3" width="5" height="11.0" fill="#7B68EE"/><rect x="1475.0" y="686.3" width="5" height="22.0" fill="#7B68EE"/>
<line x1="13.5" y1="708.3" x2="69.6" y2="708.3" stroke="#FF0000" stroke-width="8.4" stroke-linecap="round" stroke-dasharray="0.01 7.99"/>
<line x1="77.5" y1="708.3" x2="189.6" y2="708.3" stroke="#8B0000" stroke-width="8.4" stroke-linecap="round" stroke-dasharray="0.01 7.99"/>
<line x1="197.5" y1="708.3" x2="317.6" y2="708.3" stroke="#FF0000" stroke-width="8.4" stroke-linecap="round" stroke-dasharray="0.01 7.99"/>
<line x1="325.5" y1="708.3" x2="469.6" y2="708.3" stroke="#8B0000" stroke-width="8.4" stroke-linecap="round" stroke-dasharray="0.01 7.99"/>
<line x1="477.5" y1="708.3" x2="605.6" y2="708.3" stroke="#00FF00" stroke-width="8.4" stroke-linecap="round" stroke-dasharray="0.01 7.99"/>
<line x1="613.5" y1="708.3" x2="669.6" y2="708.3" stroke="#008000" stroke-width="8.4" stroke-linecap="round" stroke-dasharray="0.01 7.99"/>
<line x1="677.5" y1="708.3" x2="829.6" y2="708.3" stroke="#FF0000" stroke-width="8.4" stroke-linecap="round" stroke-dasharray="0.01 7.99"/>
<line x1="837.5" y1="708.3" x2="1005.6" y2="708.3" stroke="#8B0000" stroke-width="8.4" stroke-linecap="round" stroke-dasharray="0.01 7.99"/>
<line x1="1013.5" y1="708.3" x2="1101.6" y2="708.3" stroke="#FF0000" stroke-width="8.4" stroke-linecap="round" stroke-dasharray="0.01 7.99"/>
<line x1="1109.5" y1="708.3" x2="1181.6" y2="708.3" stroke="#8B0000" stroke-width="8.4" stroke-linecap="round" stroke-dasharray="0.01 7.99"/>
<line x1="1189.5" y1="708.3" x2="1293.6" y2="708.3" stroke="#00FF00" stroke-width="8.4" stroke-linecap="round" stroke-dasharray="0.01 7.99"/>
<line x1="1301.5" y1="708.3" x2="1309.6" y2="708.3" stroke="#008000" stroke-width="8.4" stroke-linecap="round" stroke-dasharray="0.01 7.99"/>
<line x1="1317.5" y1="708.3" x2="1333.6" y2="708.3" stroke="#00FF00" stroke-width="8.4" stroke-linecap="round" stroke-dasharray="0.01 7.99"/>
<line x1="1341.5" y1="708.3" x2="1349.6" y2="708.3" stroke="#008000" stroke-width="8.4" stroke-linecap="round" stroke-dasharray="0.01 7.99"/>
<line x1="1357.5" y1="708.3" x2="1365.6" y2="708.3" stroke="#00FF00" stroke-width="8.4" stroke-linecap="round" stroke-dasharray="0.01 7.99"/>
<line x1="1373.5" y1="708.3" x2="1445.6" y2="708.3" stroke="#008000" stroke-width="8.4" stroke-linecap="round" stroke-dasharray="0.01 7.99"/>
<line x1="1453.5" y1="708.3" x2="1477.6" y2="708.3" stroke="#00FF00" stroke-width="8.4" stroke-linecap="round" stroke-dasharray="0.01 7.99"/>
<polyline points="13.5,719.8 21.5,724.8 29.5,728.3 37.5,730.3 45.5,731.8 53.5,731.3 61.5,725.3 69.5,715.3 77.5,705.3 85.5,698.3 93.5,691.3 101.5,688.3 109.5,687.3 117.5,688.3 125.5,689.3 133.5,688.3 141.5,684.3 149.5,679.3 157.5,677.3 165.5,679.3 173.5,685.3 181.5,696.3 189.5,708.3 197.5,718.3 205.5,727.3 213.5,733.3 221.5,738.3 229.5,741.3 237.5,741.3 245.5,737.3 253.5,730.3 261.5,723.3 269.5,716.3 277.5,716.3 285.5,718.3 293.5,720.3 301.5,723.3 309.5,722.3 317.5,718.3 325.5,710.3 333.5,703.3 341.5,699.3 349.5,697.8 357.5,699.3 365.5,696.3 373.5,691.3 381.5,687.3 389.5,687.3 397.5,692.3 405.5,700.3 413.5,708.3 421.5,713.3 429.5,710.3 437.5,703.3 445.5,697.3 453.5,692.3 461.5,688.3 469.5,688.3 477.5,685.3 485.5,675.3 493.5,667.3 501.5,662.3 509.5,662.8 517.5,666.3 525.5,673.3 533.5,677.3 541.5,681.3 549.5,685.3 557.5,687.8 565.5,691.3 573.5,693.3 581.5,694.3 589.5,696.8 597.5,700.3 605.5,706.3 613.5,713.3 621.5,724.3 629.5,737.3 637.5,748.3 645.5,755.3 653.5,758.3 661.5,757.3 669.5,753.3 677.5,751.3 685.5,747.3 693.5,744.3 701.5,739.3 709.5,733.3 717.5,724.3 725.5,719.3 733.5,713.3 741.5,713.3 749.5,718.3 757.5,723.3 765.5,731.3 773.5,734.3 781.5,736.3 789.5,737.8 797.5,735.3 805.5,733.3 813.5,726.3 821.5,718.3 829.5,710.3 837.5,703.3 845.5,697.3 853.5,693.3 861.5,688.3 869.5,684.3 877.5,683.3 885.5,683.3 893.5,690.3 901.5,698.3 909.5,703.3 917.5,705.3 925.5,706.3 933.5,705.3 941.5,703.3 949.5,699.3 957.5,695.3 965.5,692.3 973.5,695.3 981.5,699.3 989.5,703.3 997.5,705.3 1005.5,709.3 1013.5,716.3 1021.5,723.3 1029.5,729.3 1037.5,734.3 1045.5,737.3 1053.5,739.3 1061.5,742.3 1069.5,747.3 1077.5,747.3 1085.5,741.3 1093.5,728.3 1101.5,713.3 1109.5,700.3 1117.5,690.3 1125.5,680.3 1133.5,674.3 1141.5,674.3 1149.5,678.3 1157.5,685.3 1165.5,691.3 1173.5,693.3 1181.5,691.3 1189.5,686.3 1197.5,681.3 1205.5,680.3 1213.5,681.3 1221.5,684.3 1229.5,684.3 1237.5,687.3 1245.5,698.3 1253.5,706.3 1261.5,713.3 1269.5,716.3 1277.5,714.3 1285.5,712.3 1293.5,712.3 1301.5,713.3 1309.5,714.3 1317.5,711.3 1325.5,707.3 1333.5,706.3 1341.5,707.3 1349.5,709.3 1357.5,710.3 1365.5,710.3 1373.5,712.3 1381.5,715.3 1389.5,717.3 1397.5,717.3 1405.5,714.3 1413.5,711.3 1421.5,712.3 1429.5,715.3 1437.5,716.8 1445.5,716.3 1453.5,711.3 1461.5,705.3 1469.5,700.3 1477.5,694.3" fill="none" stroke="#7FFFD4" stroke-width="1.1"/>
</g>
<text x="17" y="663" font-size="9.3" fill="#fff" textLength="122" font-family='"Liberation Sans","Noto Sans CJK SC",sans-serif'>MACD MTI (Momentum) 9 6</text>
<text x="1871" y="661.0" font-size="9.6" fill="#fff" font-family='"Liberation Sans","Noto Sans CJK SC",sans-serif'>22</text>
<text x="1871" y="713.4" font-size="9.6" fill="#fff" font-family='"Liberation Sans","Noto Sans CJK SC",sans-serif'>0.00</text>
<text x="1871" y="763.4" font-size="9.6" fill="#fff" font-family='"Liberation Sans","Noto Sans CJK SC",sans-serif'>-22</text>
<path d="M1867 652.5 h3 M1867 708.5 h3 M1867 766.5 h2.5 M1867 771.5 h2.5 M1867 985.5 h3" stroke="#fff"/>
<text x="17" y="781.7" font-size="9.3" fill="#fff" textLength="203" font-family='"Liberation Sans","Noto Sans CJK SC",sans-serif'>5TF MACD 1.0000 2.0000 3.0000 4.0000 5.0000</text>
<g clip-path="url(#cTF)">
<line x1="10.1" y1="806" x2="1480.5" y2="806" stroke="#DB7093" stroke-width="6" stroke-dasharray="6.4 1.6"/>
<text x="1517" y="799" font-size="10" fill="#A8A8A8" text-anchor="middle" font-family='"Liberation Sans","Noto Sans CJK SC",sans-serif'>D1</text>
<line x1="10.1" y1="842" x2="1480.5" y2="842" stroke="#DB7093" stroke-width="6" stroke-dasharray="6.4 1.6"/>
<text x="1517" y="835" font-size="10" fill="#A8A8A8" text-anchor="middle" font-family='"Liberation Sans","Noto Sans CJK SC",sans-serif'>H4</text>
<line x1="10.1" y1="878" x2="1448.5" y2="878" stroke="#DB7093" stroke-width="6" stroke-dasharray="6.4 1.6"/>
<line x1="1450.0" y1="878" x2="1480.5" y2="878" stroke="#32CD32" stroke-width="6" stroke-dasharray="6.4 1.6"/>
<text x="1517" y="871" font-size="10" fill="#A8A8A8" text-anchor="middle" font-family='"Liberation Sans","Noto Sans CJK SC",sans-serif'>H1</text>
<line x1="10.1" y1="914" x2="512.5" y2="914" stroke="#DB7093" stroke-width="6" stroke-dasharray="6.4 1.6"/>
<line x1="514.0" y1="914" x2="712.5" y2="914" stroke="#32CD32" stroke-width="6" stroke-dasharray="6.4 1.6"/>
<line x1="714.0" y1="914" x2="1264.5" y2="914" stroke="#DB7093" stroke-width="6" stroke-dasharray="6.4 1.6"/>
<line x1="1266.0" y1="914" x2="1480.5" y2="914" stroke="#32CD32" stroke-width="6" stroke-dasharray="6.4 1.6"/>
<text x="1517" y="907" font-size="10" fill="#A8A8A8" text-anchor="middle" font-family='"Liberation Sans","Noto Sans CJK SC",sans-serif'>M30</text>
<line x1="10.1" y1="950" x2="472.5" y2="950" stroke="#DB7093" stroke-width="6" stroke-dasharray="6.4 1.6"/>
<line x1="474.1" y1="950" x2="672.5" y2="950" stroke="#32CD32" stroke-width="6" stroke-dasharray="6.4 1.6"/>
<line x1="674.0" y1="950" x2="1184.5" y2="950" stroke="#DB7093" stroke-width="6" stroke-dasharray="6.4 1.6"/>
<line x1="1186.0" y1="950" x2="1480.5" y2="950" stroke="#32CD32" stroke-width="6" stroke-dasharray="6.4 1.6"/>
<text x="1517" y="943" font-size="10" fill="#A8A8A8" text-anchor="middle" font-family='"Liberation Sans","Noto Sans CJK SC",sans-serif'>M15</text>
</g>
<text x="1871" y="780" font-size="9.6" fill="#fff" font-family='"Liberation Sans","Noto Sans CJK SC",sans-serif'>6</text><text x="1871" y="984" font-size="9.6" fill="#fff" font-family='"Liberation Sans","Noto Sans CJK SC",sans-serif'>0</text>
<line x1="12.7" y1="987" x2="12.7" y2="990" stroke="#fff"/>
<text x="12.7" y="1000" font-size="9.3" fill="#fff" font-family='"Liberation Sans","Noto Sans CJK SC",sans-serif'>19 Sep 2022</text>
<line x1="76.7" y1="987" x2="76.7" y2="990" stroke="#fff"/>
<text x="76.7" y="1000" font-size="9.3" fill="#fff" font-family='"Liberation Sans","Noto Sans CJK SC",sans-serif'>19 Sep 22:30</text>
<line x1="140.7" y1="987" x2="140.7" y2="990" stroke="#fff"/>
<text x="140.7" y="1000" font-size="9.3" fill="#fff" font-family='"Liberation Sans","Noto Sans CJK SC",sans-serif'>20 Sep 10:45</text>
<line x1="204.7" y1="987" x2="204.7" y2="990" stroke="#fff"/>
<text x="204.7" y="1000" font-size="9.3" fill="#fff" font-family='"Liberation Sans","Noto Sans CJK SC",sans-serif'>20 Sep 14:45</text>
<line x1="268.7" y1="987" x2="268.7" y2="990" stroke="#fff"/>
<text x="268.7" y="1000" font-size="9.3" fill="#fff" font-family='"Liberation Sans","Noto Sans CJK SC",sans-serif'>20 Sep 22:45</text>
<line x1="332.7" y1="987" x2="332.7" y2="990" stroke="#fff"/>
<text x="332.7" y="1000" font-size="9.3" fill="#fff" font-family='"Liberation Sans","Noto Sans CJK SC",sans-serif'>21 Sep 11:00</text>
<line x1="396.7" y1="987" x2="396.7" y2="990" stroke="#fff"/>
<text x="396.7" y="1000" font-size="9.3" fill="#fff" font-family='"Liberation Sans","Noto Sans CJK SC",sans-serif'>21 Sep 21:00</text>
<line x1="460.7" y1="987" x2="460.7" y2="990" stroke="#fff"/>
<text x="460.7" y="1000" font-size="9.3" fill="#fff" font-family='"Liberation Sans","Noto Sans CJK SC",sans-serif'>22 Sep 09:00</text>
<line x1="524.7" y1="987" x2="524.7" y2="990" stroke="#fff"/>
<text x="524.7" y="1000" font-size="9.3" fill="#fff" font-family='"Liberation Sans","Noto Sans CJK SC",sans-serif'>22 Sep 11:15</text>
<line x1="588.7" y1="987" x2="588.7" y2="990" stroke="#fff"/>
<text x="588.7" y="1000" font-size="9.3" fill="#fff" font-family='"Liberation Sans","Noto Sans CJK SC",sans-serif'>22 Sep 21:15</text>
<line x1="652.7" y1="987" x2="652.7" y2="990" stroke="#fff"/>
<text x="652.7" y="1000" font-size="9.3" fill="#fff" font-family='"Liberation Sans","Noto Sans CJK SC",sans-serif'>23 Sep 09:15</text>
<line x1="716.7" y1="987" x2="716.7" y2="990" stroke="#fff"/>
<text x="716.7" y="1000" font-size="9.3" fill="#fff" font-family='"Liberation Sans","Noto Sans CJK SC",sans-serif'>23 Sep 13:30</text>
<line x1="780.7" y1="987" x2="780.7" y2="990" stroke="#fff"/>
<text x="780.7" y="1000" font-size="9.3" fill="#fff" font-family='"Liberation Sans","Noto Sans CJK SC",sans-serif'>23 Sep 21:30</text>
<line x1="844.7" y1="987" x2="844.7" y2="990" stroke="#fff"/>
<text x="844.7" y="1000" font-size="9.3" fill="#fff" font-family='"Liberation Sans","Noto Sans CJK SC",sans-serif'>26 Sep 09:30</text>
<line x1="908.7" y1="987" x2="908.7" y2="990" stroke="#fff"/>
<text x="908.7" y="1000" font-size="9.3" fill="#fff" font-family='"Liberation Sans","Noto Sans CJK SC",sans-serif'>26 Sep 13:45</text>
<line x1="972.7" y1="987" x2="972.7" y2="990" stroke="#fff"/>
<text x="972.7" y="1000" font-size="9.3" fill="#fff" font-family='"Liberation Sans","Noto Sans CJK SC",sans-serif'>26 Sep 21:45</text>
<line x1="1036.7" y1="987" x2="1036.7" y2="990" stroke="#fff"/>
<text x="1036.7" y="1000" font-size="9.3" fill="#fff" font-family='"Liberation Sans","Noto Sans CJK SC",sans-serif'>27 Sep 09:45</text>
<line x1="1100.7" y1="987" x2="1100.7" y2="990" stroke="#fff"/>
<text x="1100.7" y="1000" font-size="9.3" fill="#fff" font-family='"Liberation Sans","Noto Sans CJK SC",sans-serif'>27 Sep 14:00</text>
<line x1="1164.7" y1="987" x2="1164.7" y2="990" stroke="#fff"/>
<text x="1164.7" y="1000" font-size="9.3" fill="#fff" font-family='"Liberation Sans","Noto Sans CJK SC",sans-serif'>27 Sep 22:00</text>
<line x1="1228.7" y1="987" x2="1228.7" y2="990" stroke="#fff"/>
<text x="1228.7" y="1000" font-size="9.3" fill="#fff" font-family='"Liberation Sans","Noto Sans CJK SC",sans-serif'>28 Sep 10:00</text>
<line x1="1292.7" y1="987" x2="1292.7" y2="990" stroke="#fff"/>
<text x="1292.7" y="1000" font-size="9.3" fill="#fff" font-family='"Liberation Sans","Noto Sans CJK SC",sans-serif'>28 Sep 14:15</text>
<line x1="1356.7" y1="987" x2="1356.7" y2="990" stroke="#fff"/>
<text x="1356.7" y="1000" font-size="9.3" fill="#fff" font-family='"Liberation Sans","Noto Sans CJK SC",sans-serif'>28 Sep 22:15</text>
<line x1="1420.7" y1="987" x2="1420.7" y2="990" stroke="#fff"/>
<text x="1420.7" y="1000" font-size="9.3" fill="#fff" font-family='"Liberation Sans","Noto Sans CJK SC",sans-serif'>29 Sep 10:30</text>
<rect x="8" y="1008" width="1901" height="24" fill="#F0F0F0"/><line x1="8" y1="1008.5" x2="1909" y2="1008.5" stroke="#dcdcdc"/>
<text x="10" y="1026" font-size="12" fill="#000" font-family='"Liberation Sans","Noto Sans CJK SC",sans-serif'>寻求帮助,请按F1键</text>
<line x1="1093.3" y1="1013" x2="1093.3" y2="1030.5" stroke="#a8a8a8"/>
<line x1="1228.3" y1="1013" x2="1228.3" y2="1030.5" stroke="#a8a8a8"/>
<line x1="1346" y1="1013" x2="1346" y2="1030.5" stroke="#a8a8a8"/>
<line x1="1428" y1="1013" x2="1428" y2="1030.5" stroke="#a8a8a8"/>
<line x1="1509" y1="1013" x2="1509" y2="1030.5" stroke="#a8a8a8"/>
<line x1="1587" y1="1013" x2="1587" y2="1030.5" stroke="#a8a8a8"/>
<line x1="1666" y1="1013" x2="1666" y2="1030.5" stroke="#a8a8a8"/>
<line x1="1744.7" y1="1013" x2="1744.7" y2="1030.5" stroke="#a8a8a8"/>
<text x="1100" y="1026" font-size="12" fill="#000" font-family='"Liberation Sans","Noto Sans CJK SC",sans-serif'>777</text>
<text x="1777.5" y="1026" font-size="12" fill="#000" textLength="51.5" font-family='"Liberation Sans","Noto Sans CJK SC",sans-serif'>133/1 kb</text>
<rect x="1750.5" y="1015.0" width="1.6" height="12.0" fill="#6a9a20"/><rect x="1753.2" y="1015.0" width="1.6" height="12.0" fill="#6a9a20"/><rect x="1755.9" y="1015.0" width="1.6" height="12.0" fill="#6a9a20"/><rect x="1758.6" y="1015.0" width="1.6" height="12.0" fill="#6a9a20"/><rect x="1761.3" y="1015.0" width="1.6" height="12.0" fill="#2a6aa8"/><rect x="1764.0" y="1016.0" width="1.6" height="11.0" fill="#2a6aa8"/><rect x="1766.7" y="1017.0" width="1.6" height="10.0" fill="#2a6aa8"/><rect x="1769.4" y="1018.0" width="1.6" height="9.0" fill="#2a6aa8"/><rect x="1772.1" y="1019.0" width="1.6" height="8.0" fill="#2a6aa8"/>
<path d="M1897 1030 l10 -10 M1900.5 1030 l6.5 -6.5 M1904 1030 l3 -3" stroke="#b0b0b0" stroke-width="1.2"/>
</svg></body></html>
